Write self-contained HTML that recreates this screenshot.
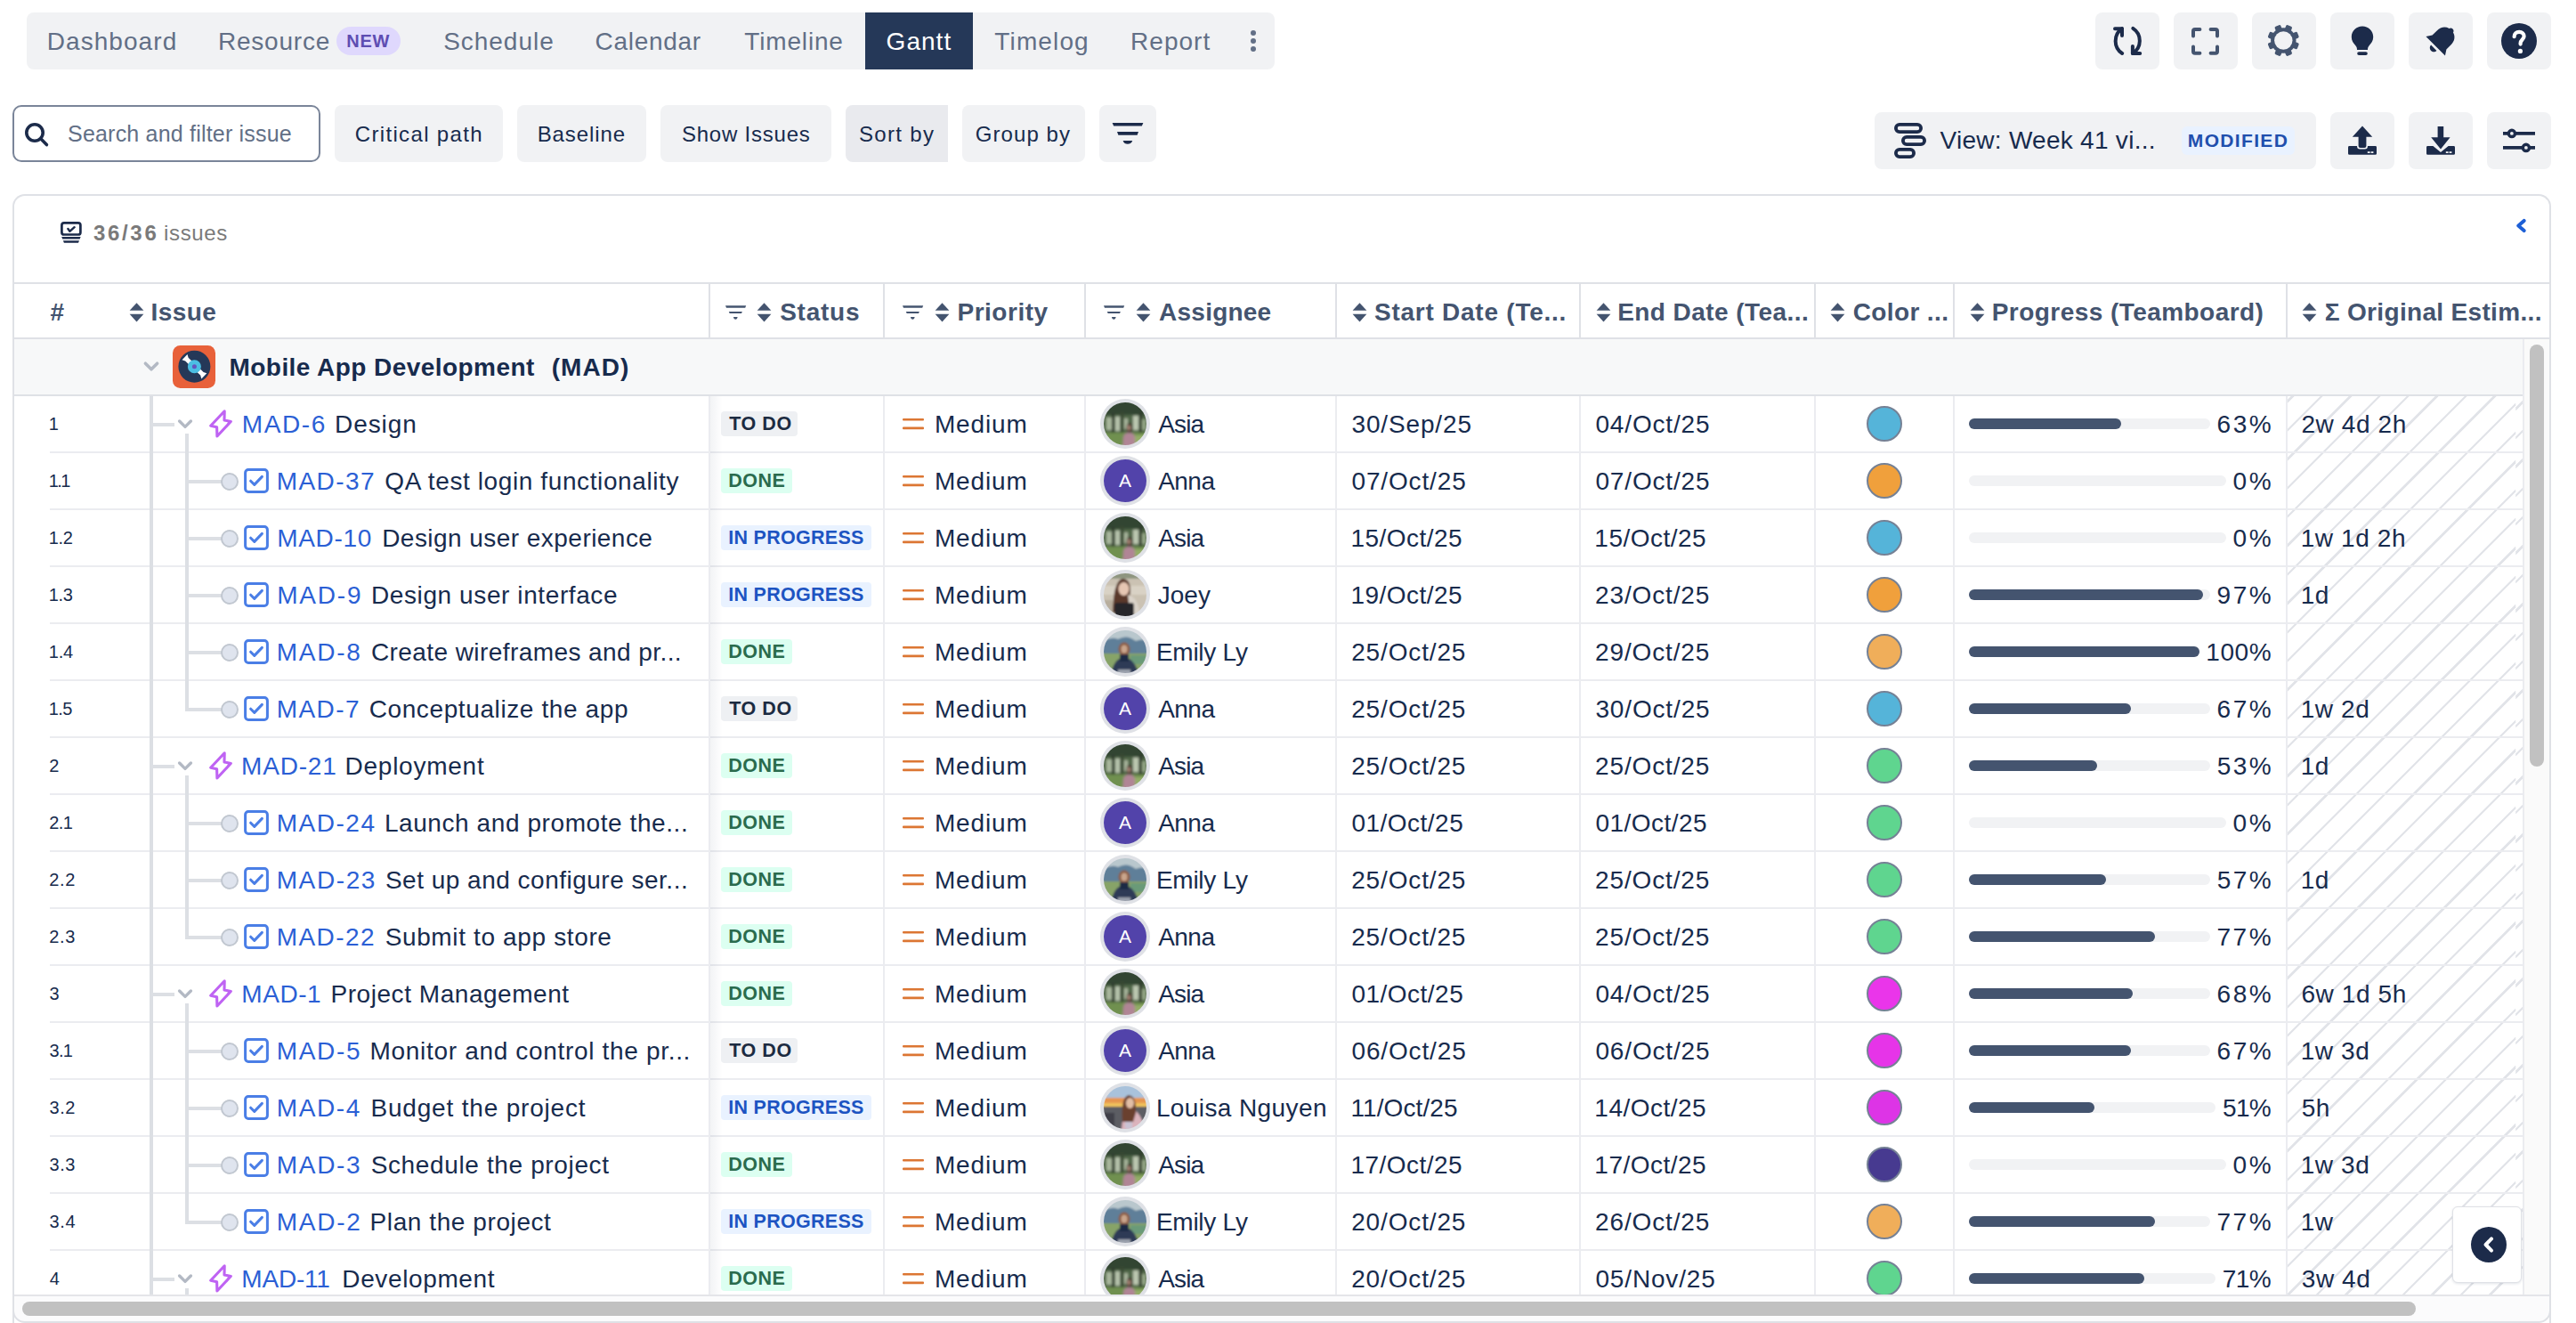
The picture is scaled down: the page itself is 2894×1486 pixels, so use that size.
<!DOCTYPE html><html><head><meta charset="utf-8"><style>
html,body{margin:0;padding:0;}
body{width:2894px;height:1486px;overflow:hidden;position:relative;background:#ffffff;font-family:"Liberation Sans",sans-serif;}
.t{position:absolute;white-space:nowrap;line-height:1;}
.b{position:absolute;box-sizing:border-box;}
svg.b{overflow:visible;}
</style></head><body>
<div class="b" style="left:30px;top:14px;width:1402px;height:64px;background:#f1f2f4;border-radius:8px;"></div>
<div class="b" style="left:972px;top:14px;width:121px;height:64px;background:#253858;"></div>
<div class="t" style="left:52.80px;top:32.89px;font-size:28px;color:#626f86;letter-spacing:1.053px;">Dashboard</div>
<div class="t" style="left:245.00px;top:32.89px;font-size:28px;color:#626f86;letter-spacing:0.772px;">Resource</div>
<div class="t" style="left:498.13px;top:32.89px;font-size:28px;color:#626f86;letter-spacing:0.980px;">Schedule</div>
<div class="t" style="left:668.58px;top:32.89px;font-size:28px;color:#626f86;letter-spacing:0.694px;">Calendar</div>
<div class="t" style="left:836.37px;top:32.89px;font-size:28px;color:#626f86;letter-spacing:0.824px;">Timeline</div>
<div class="t" style="left:1117.37px;top:32.89px;font-size:28px;color:#626f86;letter-spacing:1.125px;">Timelog</div>
<div class="t" style="left:1270.10px;top:32.89px;font-size:28px;color:#626f86;letter-spacing:1.012px;">Report</div>
<div class="t" style="left:995.59px;top:32.89px;font-size:28px;color:#ffffff;letter-spacing:1.033px;">Gantt</div>
<div class="b" style="left:378px;top:30px;width:72px;height:32px;background:#dfd8fd;border-radius:16px;"></div>
<div class="t" style="left:389.36px;top:36.17px;font-size:20px;color:#5e4db2;font-weight:700;letter-spacing:0.699px;">NEW</div>
<div class="b" style="left:1405px;top:33.5px;width:6px;height:6px;background:#626f86;border-radius:50%;"></div>
<div class="b" style="left:1405px;top:43px;width:6px;height:6px;background:#626f86;border-radius:50%;"></div>
<div class="b" style="left:1405px;top:52.4px;width:6px;height:6px;background:#626f86;border-radius:50%;"></div>
<div class="b" style="left:2354px;top:14px;width:72px;height:64px;background:#f1f2f4;border-radius:8px;"></div>
<div class="b" style="left:2442px;top:14px;width:72px;height:64px;background:#f1f2f4;border-radius:8px;"></div>
<div class="b" style="left:2530px;top:14px;width:72px;height:64px;background:#f1f2f4;border-radius:8px;"></div>
<div class="b" style="left:2618px;top:14px;width:72px;height:64px;background:#f1f2f4;border-radius:8px;"></div>
<div class="b" style="left:2706px;top:14px;width:72px;height:64px;background:#f1f2f4;border-radius:8px;"></div>
<div class="b" style="left:2794px;top:14px;width:72px;height:64px;background:#f1f2f4;border-radius:8px;"></div>
<svg class="b" style="left:2374px;top:30px" width="32" height="32" viewBox="0 0 32 32"><g fill="none" stroke="#1c2b4a" stroke-width="4" stroke-linecap="round" stroke-linejoin="round"><path d="M10 2.2 A16.7 16.7 0 0 0 10.2 30"/><path d="M2 2.2 H10 V9.9"/><path d="M22.3 1.8 A16.7 16.7 0 0 1 21.9 30"/><path d="M21.9 21.9 V30 H30.2"/></g></svg>
<svg class="b" style="left:2462.3px;top:30.6px" width="32" height="32" viewBox="0 0 32 32"><g fill="none" stroke="#44546f" stroke-width="4" stroke-linecap="round" stroke-linejoin="round"><path d="M2 9.4 V4 Q2 2 4 2 H9.4"/><path d="M21.6 2 H27 Q29 2 29 4 V9.4"/><path d="M29 21.4 V26.8 Q29 28.8 27 28.8 H21.6"/><path d="M9.4 28.8 H4 Q2 28.8 2 26.8 V21.4"/></g></svg>
<svg class="b" style="left:2547px;top:27px" width="36" height="36" viewBox="0 0 36 36"><g transform="translate(18.3 18.5)" fill="#44546f"><rect x="-3.6" y="-17.8" width="7.2" height="8" rx="1.6" transform="rotate(22.5)"/><rect x="-3.6" y="-17.8" width="7.2" height="8" rx="1.6" transform="rotate(67.5)"/><rect x="-3.6" y="-17.8" width="7.2" height="8" rx="1.6" transform="rotate(112.5)"/><rect x="-3.6" y="-17.8" width="7.2" height="8" rx="1.6" transform="rotate(157.5)"/><rect x="-3.6" y="-17.8" width="7.2" height="8" rx="1.6" transform="rotate(202.5)"/><rect x="-3.6" y="-17.8" width="7.2" height="8" rx="1.6" transform="rotate(247.5)"/><rect x="-3.6" y="-17.8" width="7.2" height="8" rx="1.6" transform="rotate(292.5)"/><rect x="-3.6" y="-17.8" width="7.2" height="8" rx="1.6" transform="rotate(337.5)"/><circle r="14.2"/></g><circle cx="18.3" cy="18.5" r="10.2" fill="#f1f2f4"/></svg>
<svg class="b" style="left:2640px;top:28px" width="28" height="36" viewBox="0 0 28 36"><g fill="#1c2b4a"><path d="M14 1.6 C7.2 1.6 1.8 6.8 1.8 13.4 C1.8 17.6 4 20.4 6.2 23 C7.6 24.6 8 26 8 27.9 H20 C20 26 20.4 24.6 21.8 23 C24 20.4 26.2 17.6 26.2 13.4 C26.2 6.8 20.8 1.6 14 1.6 Z"/><rect x="8.2" y="30.2" width="11.6" height="3.8" rx="1.9"/></g></svg>
<svg class="b" style="left:2724px;top:25.6px" width="38" height="38" viewBox="0 0 38 38"><g fill="#1c2b4a" transform="translate(19 19) scale(1.12) rotate(45) translate(-19 -19)"><path d="M19 3.2 C20.6 3.2 21.6 4.2 21.8 5.4 C26.4 6.6 29 10.6 29 15.6 V22.2 L32.6 27.6 H5.4 L9 22.2 V15.6 C9 10.6 11.6 6.6 16.2 5.4 C16.4 4.2 17.4 3.2 19 3.2 Z"/><path d="M15 30 H23 C23 32.4 21.2 34 19 34 C16.8 34 15 32.4 15 30 Z"/></g></svg>
<svg class="b" style="left:2810px;top:25.8px" width="40" height="40" viewBox="0 0 40 40"><circle cx="20" cy="20" r="20" fill="#1c2b4a"/><path d="M14.6 15.2 C14.6 11.8 17 9.9 20.2 9.9 C23.4 9.9 25.6 12 25.6 14.8 C25.6 18.4 21.6 18.8 21.6 22.6 V23.6" fill="none" stroke="#fff" stroke-width="4.2" stroke-linecap="round"/><circle cx="21.4" cy="31.4" r="2.6" fill="#fff"/></svg>
<div class="b" style="left:14px;top:118px;width:346px;height:64px;border:2px solid #7a8599;border-radius:10px;background:#fff;"></div>
<svg class="b" style="left:26px;top:136px" width="30" height="30" viewBox="0 0 30 30"><g fill="none" stroke="#1c2b4a" stroke-width="3.6" stroke-linecap="round"><circle cx="13" cy="13" r="9.2"/><path d="M20 20 L26.4 26.6"/></g></svg>
<div class="t" style="left:76.06px;top:138.13px;font-size:25px;color:#626f86;letter-spacing:0.195px;">Search and filter issue</div>
<div class="b" style="left:376px;top:118px;width:189px;height:64px;background:#f1f2f4;border-radius:8px;"></div>
<div class="t" style="left:398.78px;top:138.58px;font-size:24px;color:#172b4d;letter-spacing:1.339px;">Critical path</div>
<div class="b" style="left:581px;top:118px;width:145px;height:64px;background:#f1f2f4;border-radius:8px;"></div>
<div class="t" style="left:603.73px;top:138.58px;font-size:24px;color:#172b4d;letter-spacing:0.896px;">Baseline</div>
<div class="b" style="left:742px;top:118px;width:192px;height:64px;background:#f1f2f4;border-radius:8px;"></div>
<div class="t" style="left:765.91px;top:138.58px;font-size:24px;color:#172b4d;letter-spacing:0.789px;">Show Issues</div>
<div class="b" style="left:950px;top:118px;width:115px;height:64px;background:#e9eaee;border-radius:8px 0 0 8px;"></div>
<div class="t" style="left:964.91px;top:138.58px;font-size:24px;color:#172b4d;letter-spacing:1.351px;">Sort by</div>
<div class="b" style="left:1081px;top:118px;width:138px;height:64px;background:#f1f2f4;border-radius:8px;"></div>
<div class="t" style="left:1095.79px;top:138.58px;font-size:24px;color:#172b4d;letter-spacing:1.076px;">Group by</div>
<div class="b" style="left:1235px;top:118px;width:64px;height:64px;background:#f1f2f4;border-radius:8px;"></div>
<svg class="b" style="left:1248px;top:136px" width="38" height="28" viewBox="0 0 38 28"><g fill="#1c2b4a"><path d="M1.6 2 H36.4 L34.8 5.6 H3.2 Z"/><path d="M7 12 H31 L29.6 15.8 H8.4 Z"/><path d="M13.6 22 H24.2 C23.4 24.8 21.4 25.8 18.9 25.8 C16.4 25.8 14.4 24.8 13.6 22 Z"/></g></svg>
<div class="b" style="left:2106px;top:126px;width:496px;height:64px;background:#f1f2f4;border-radius:8px;"></div>
<svg class="b" style="left:2126px;top:136px" width="40" height="44" viewBox="0 0 40 44"><g fill="none" stroke="#1c2b4a" stroke-width="3.8"><rect x="3.9" y="3.9" width="28.2" height="8.2" rx="4.1"/><rect x="11.9" y="17.9" width="24.2" height="8.2" rx="4.1"/><rect x="3.9" y="31.9" width="20.2" height="8.2" rx="4.1"/></g></svg>
<div class="t" style="left:2179.48px;top:144.29px;font-size:28px;color:#172b4d;letter-spacing:0.278px;">View: Week 41 vi...</div>
<div class="b" style="left:2450.5px;top:141.5px;width:127px;height:32.5px;background:#e9f2ff;border-radius:6px;"></div>
<div class="t" style="left:2457.80px;top:147.22px;font-size:21px;color:#1f4fad;font-weight:700;letter-spacing:1.346px;">MODIFIED</div>
<div class="b" style="left:2618px;top:126px;width:72px;height:64px;background:#f1f2f4;border-radius:8px;"></div>
<div class="b" style="left:2706px;top:126px;width:72px;height:64px;background:#f1f2f4;border-radius:8px;"></div>
<div class="b" style="left:2794px;top:126px;width:72px;height:64px;background:#f1f2f4;border-radius:8px;"></div>
<svg class="b" style="left:2636px;top:140px" width="36" height="36" viewBox="0 0 36 36"><g fill="#1c2b4a"><path d="M18 1.6 L29.2 13.8 H22.4 V24 Q22.4 26 20.4 26 H15.6 Q13.6 26 13.6 24 V13.8 H6.8 Z"/><path d="M2 25.4 Q2 24 3.4 24 H12 Q12 27.6 15.2 27.6 H20.8 Q24 27.6 24 24 H32.6 Q34 24 34 25.4 V32.4 Q34 33.8 32.6 33.8 H3.4 Q2 33.8 2 32.4 Z"/></g><g fill="#f1f2f4"><rect x="23.8" y="30.2" width="2.8" height="1.8"/><rect x="27.6" y="30.2" width="2.8" height="1.8"/></g></svg>
<svg class="b" style="left:2724px;top:140px" width="36" height="36" viewBox="0 0 36 36"><g fill="#1c2b4a"><path d="M14.6 2 H21.2 V14.2 H28.6 L18 27.4 L7.2 14.2 H14.6 Z"/><path d="M2 25.4 Q2 24 3.4 24 H9.4 L18 31 L26.6 24 H32.6 Q34 24 34 25.4 V32.4 Q34 33.8 32.6 33.8 H3.4 Q2 33.8 2 32.4 Z"/></g><g fill="#f1f2f4"><rect x="23.8" y="30.2" width="2.8" height="1.8"/><rect x="27.6" y="30.2" width="2.8" height="1.8"/></g></svg>
<svg class="b" style="left:2810px;top:140px" width="40" height="32" viewBox="0 0 40 32"><g fill="none" stroke="#1c2b4a"><path d="M2 9.9 H38" stroke-width="3.8"/><path d="M2 25.9 H38" stroke-width="3.8"/><circle cx="11.9" cy="9.9" r="3.6" stroke-width="3.4" fill="#f1f2f4"/><circle cx="27.9" cy="25.9" r="3.6" stroke-width="3.4" fill="#f1f2f4"/></g></svg>
<div class="b" style="left:14px;top:218px;width:2852px;height:1268px;border:2px solid #dfe1e6;border-bottom:none;border-radius:14px 14px 0 0;background:#fff;"></div>
<div class="b" style="left:14px;top:1456px;width:2852px;height:30px;border:2px solid #dfe1e6;border-top:none;border-radius:0 0 14px 14px;background:#fbfbfc;"></div>
<svg class="b" style="left:66px;top:247px" width="28" height="28" viewBox="0 0 28 28"><g fill="none" stroke="#1c2b4a" stroke-width="2.7" stroke-linejoin="round"><rect x="3.4" y="3.3" width="21" height="13.2" rx="2.6"/><path d="M10.4 10 L12.4 12.8 L17.6 8.2" stroke-width="2.4" stroke-linecap="round"/></g><g fill="#1c2b4a"><path d="M3.2 19 H24.6 L23.6 21.6 H4.2 Z"/><path d="M4.9 23.2 H23 L22 25.8 H5.9 Z"/></g></svg>
<div class="t" style="left:104.95px;top:249.68px;font-size:24px;color:#7a7a7a;font-weight:700;letter-spacing:2.690px;">36/36</div>
<div class="t" style="left:184.09px;top:249.68px;font-size:24px;color:#7a7a7a;letter-spacing:0.649px;">issues</div>
<svg class="b" style="left:2824px;top:243px" width="18" height="22" viewBox="0 0 18 22"><path d="M11.6 4.9 L5.3 10.5 L11.6 16.1" fill="none" stroke="#1d5fd6" stroke-width="4" stroke-linecap="round" stroke-linejoin="round"/></svg>
<div class="b" style="left:16px;top:317px;width:2848px;height:2px;background:#dfe1e6;"></div>
<div class="b" style="left:16px;top:379px;width:2848px;height:2px;background:#dfe1e6;"></div>
<div class="b" style="left:796px;top:319px;width:2px;height:60px;background:#dfe1e6;"></div>
<div class="b" style="left:992px;top:319px;width:2px;height:60px;background:#dfe1e6;"></div>
<div class="b" style="left:1218px;top:319px;width:2px;height:60px;background:#dfe1e6;"></div>
<div class="b" style="left:1500px;top:319px;width:2px;height:60px;background:#dfe1e6;"></div>
<div class="b" style="left:1774px;top:319px;width:2px;height:60px;background:#dfe1e6;"></div>
<div class="b" style="left:2038px;top:319px;width:2px;height:60px;background:#dfe1e6;"></div>
<div class="b" style="left:2194px;top:319px;width:2px;height:60px;background:#dfe1e6;"></div>
<div class="b" style="left:2568px;top:319px;width:2px;height:60px;background:#dfe1e6;"></div>
<div class="t" style="left:56.52px;top:337.29px;font-size:28px;color:#44546f;font-weight:700;letter-spacing:0.000px;">#</div>
<svg class="b" style="left:144.5px;top:340px" width="17" height="22" viewBox="0 0 17 22"><g fill="#44546f"><path d="M8.5 0.2 L16.4 8.8 H0.6 Z"/><path d="M0.6 12.8 H16.4 L8.5 21.6 Z"/></g></svg>
<div class="t" style="left:169.53px;top:337.29px;font-size:28px;color:#44546f;font-weight:700;letter-spacing:0.458px;">Issue</div>
<svg class="b" style="left:814.5px;top:343px" width="24" height="16" viewBox="0 0 24 16"><g fill="#44546f"><path d="M0 0.2 H23.2 L22.2 2.7 H1 Z"/><path d="M3.8 7.1 H18.9 L18 9.1 H4.7 Z"/><path d="M9 13 H13.6 C13.4 14.8 12.6 15.8 11.3 15.8 C10 15.8 9.2 14.8 9 13 Z"/></g></svg>
<svg class="b" style="left:850.4px;top:340px" width="17" height="22" viewBox="0 0 17 22"><g fill="#44546f"><path d="M8.5 0.2 L16.4 8.8 H0.6 Z"/><path d="M0.6 12.8 H16.4 L8.5 21.6 Z"/></g></svg>
<div class="t" style="left:876.19px;top:337.29px;font-size:28px;color:#44546f;font-weight:700;letter-spacing:0.757px;">Status</div>
<svg class="b" style="left:1014.4px;top:343px" width="24" height="16" viewBox="0 0 24 16"><g fill="#44546f"><path d="M0 0.2 H23.2 L22.2 2.7 H1 Z"/><path d="M3.8 7.1 H18.9 L18 9.1 H4.7 Z"/><path d="M9 13 H13.6 C13.4 14.8 12.6 15.8 11.3 15.8 C10 15.8 9.2 14.8 9 13 Z"/></g></svg>
<svg class="b" style="left:1050px;top:340px" width="17" height="22" viewBox="0 0 17 22"><g fill="#44546f"><path d="M8.5 0.2 L16.4 8.8 H0.6 Z"/><path d="M0.6 12.8 H16.4 L8.5 21.6 Z"/></g></svg>
<div class="t" style="left:1075.43px;top:337.29px;font-size:28px;color:#44546f;font-weight:700;letter-spacing:0.528px;">Priority</div>
<svg class="b" style="left:1239.6px;top:343px" width="24" height="16" viewBox="0 0 24 16"><g fill="#44546f"><path d="M0 0.2 H23.2 L22.2 2.7 H1 Z"/><path d="M3.8 7.1 H18.9 L18 9.1 H4.7 Z"/><path d="M9 13 H13.6 C13.4 14.8 12.6 15.8 11.3 15.8 C10 15.8 9.2 14.8 9 13 Z"/></g></svg>
<svg class="b" style="left:1276px;top:340px" width="17" height="22" viewBox="0 0 17 22"><g fill="#44546f"><path d="M8.5 0.2 L16.4 8.8 H0.6 Z"/><path d="M0.6 12.8 H16.4 L8.5 21.6 Z"/></g></svg>
<div class="t" style="left:1302.10px;top:337.29px;font-size:28px;color:#44546f;font-weight:700;letter-spacing:0.223px;">Assignee</div>
<svg class="b" style="left:1518.6px;top:340px" width="17" height="22" viewBox="0 0 17 22"><g fill="#44546f"><path d="M8.5 0.2 L16.4 8.8 H0.6 Z"/><path d="M0.6 12.8 H16.4 L8.5 21.6 Z"/></g></svg>
<div class="t" style="left:1543.99px;top:337.29px;font-size:28px;color:#44546f;font-weight:700;letter-spacing:0.753px;">Start Date (Te...</div>
<svg class="b" style="left:1792.5px;top:340px" width="17" height="22" viewBox="0 0 17 22"><g fill="#44546f"><path d="M8.5 0.2 L16.4 8.8 H0.6 Z"/><path d="M0.6 12.8 H16.4 L8.5 21.6 Z"/></g></svg>
<div class="t" style="left:1817.13px;top:337.29px;font-size:28px;color:#44546f;font-weight:700;letter-spacing:0.451px;">End Date (Tea...</div>
<svg class="b" style="left:2056px;top:340px" width="17" height="22" viewBox="0 0 17 22"><g fill="#44546f"><path d="M8.5 0.2 L16.4 8.8 H0.6 Z"/><path d="M0.6 12.8 H16.4 L8.5 21.6 Z"/></g></svg>
<div class="t" style="left:2081.65px;top:337.29px;font-size:28px;color:#44546f;font-weight:700;letter-spacing:0.382px;">Color ...</div>
<svg class="b" style="left:2212.7px;top:340px" width="17" height="22" viewBox="0 0 17 22"><g fill="#44546f"><path d="M8.5 0.2 L16.4 8.8 H0.6 Z"/><path d="M0.6 12.8 H16.4 L8.5 21.6 Z"/></g></svg>
<div class="t" style="left:2237.73px;top:337.29px;font-size:28px;color:#44546f;font-weight:700;letter-spacing:0.449px;">Progress (Teamboard)</div>
<svg class="b" style="left:2586.4px;top:340px" width="17" height="22" viewBox="0 0 17 22"><g fill="#44546f"><path d="M8.5 0.2 L16.4 8.8 H0.6 Z"/><path d="M0.6 12.8 H16.4 L8.5 21.6 Z"/></g></svg>
<div class="t" style="left:2611.77px;top:337.29px;font-size:28px;color:#44546f;font-weight:700;letter-spacing:0.329px;">Σ Original Estim...</div>
<div class="b" style="left:16px;top:381px;width:2819px;height:62px;background:#f7f8f9;"></div>
<div class="b" style="left:16px;top:443px;width:2819px;height:2px;background:#dfe1e6;"></div>
<svg class="b" style="left:160px;top:404px" width="20" height="16" viewBox="0 0 20 16"><path d="M3.4 4.2 L10 10.8 L16.6 4.2" fill="none" stroke="#b3b9c4" stroke-width="3.6" stroke-linecap="round" stroke-linejoin="round"/></svg>
<svg class="b" style="left:194px;top:388px" width="48" height="48" viewBox="0 0 48 48"><rect width="48" height="48" rx="8.5" fill="#e8613a"/><circle cx="24.4" cy="23.7" r="18" fill="#253858"/><g fill="#fff"><path id="pw" d="M10.5 16.2 L16.5 9.9 L17.6 13.8 L21.4 17.4 L17.8 21 L14.2 17.4 Z"/><path d="M10.5 16.2 L16.5 9.9 L17.6 13.8 L21.4 17.4 L17.8 21 L14.2 17.4 Z" transform="rotate(180 24.4 23.7)"/></g><circle cx="24.4" cy="23.7" r="7.5" fill="#4bbee3"/><circle cx="24.4" cy="23.7" r="2.5" fill="#6554c0"/></svg>
<div class="t" style="left:257.53px;top:398.79px;font-size:28px;color:#172b4d;font-weight:700;letter-spacing:0.445px;">Mobile App Development</div>
<div class="t" style="left:619.71px;top:398.79px;font-size:28px;color:#172b4d;font-weight:700;letter-spacing:1.069px;">(MAD)</div>
<div class="b" style="left:16px;top:445px;width:2819px;height:1010px;overflow:hidden;">
<div class="b" style="left:-16px;top:-445px;width:2894px;height:1486px;">
<div class="b" style="left:2570px;top:445px;width:265px;height:1011px;background:repeating-linear-gradient(-45deg, transparent 0px, transparent 20.5px, #e1e3e8 20.5px, #e1e3e8 22.9px);background-position:-8.80px 0;"></div>
<div class="b" style="left:56px;top:507px;width:2779px;height:2px;background:#ebecf0;"></div>
<div class="b" style="left:56px;top:571px;width:2779px;height:2px;background:#ebecf0;"></div>
<div class="b" style="left:56px;top:635px;width:2779px;height:2px;background:#ebecf0;"></div>
<div class="b" style="left:56px;top:699px;width:2779px;height:2px;background:#ebecf0;"></div>
<div class="b" style="left:56px;top:763px;width:2779px;height:2px;background:#ebecf0;"></div>
<div class="b" style="left:56px;top:827px;width:2779px;height:2px;background:#ebecf0;"></div>
<div class="b" style="left:56px;top:891px;width:2779px;height:2px;background:#ebecf0;"></div>
<div class="b" style="left:56px;top:955px;width:2779px;height:2px;background:#ebecf0;"></div>
<div class="b" style="left:56px;top:1019px;width:2779px;height:2px;background:#ebecf0;"></div>
<div class="b" style="left:56px;top:1083px;width:2779px;height:2px;background:#ebecf0;"></div>
<div class="b" style="left:56px;top:1147px;width:2779px;height:2px;background:#ebecf0;"></div>
<div class="b" style="left:56px;top:1211px;width:2779px;height:2px;background:#ebecf0;"></div>
<div class="b" style="left:56px;top:1275px;width:2779px;height:2px;background:#ebecf0;"></div>
<div class="b" style="left:56px;top:1339px;width:2779px;height:2px;background:#ebecf0;"></div>
<div class="b" style="left:56px;top:1403px;width:2779px;height:2px;background:#ebecf0;"></div>
<div class="b" style="left:56px;top:1467px;width:2779px;height:2px;background:#ebecf0;"></div>
<div class="b" style="left:796px;top:445px;width:2px;height:1011px;background:#ebecf0;"></div>
<div class="b" style="left:992px;top:445px;width:2px;height:1011px;background:#ebecf0;"></div>
<div class="b" style="left:1218px;top:445px;width:2px;height:1011px;background:#ebecf0;"></div>
<div class="b" style="left:1500px;top:445px;width:2px;height:1011px;background:#ebecf0;"></div>
<div class="b" style="left:1774px;top:445px;width:2px;height:1011px;background:#ebecf0;"></div>
<div class="b" style="left:2038px;top:445px;width:2px;height:1011px;background:#ebecf0;"></div>
<div class="b" style="left:2194px;top:445px;width:2px;height:1011px;background:#ebecf0;"></div>
<div class="b" style="left:2568px;top:445px;width:2px;height:1011px;background:#ebecf0;"></div>
<div class="b" style="left:798px;top:445px;width:14px;height:1011px;background:linear-gradient(90deg, rgba(9,30,66,0.05), rgba(9,30,66,0));"></div>
<div class="b" style="left:168px;top:445px;width:4px;height:1011px;background:#dcdfe4;"></div>
<div class="b" style="left:208px;top:487px;width:4px;height:312px;background:#dcdfe4;"></div>
<div class="b" style="left:208px;top:871px;width:4px;height:184px;background:#dcdfe4;"></div>
<div class="b" style="left:208px;top:1127px;width:4px;height:248px;background:#dcdfe4;"></div>
<div class="b" style="left:208px;top:1447px;width:4px;height:10px;background:#dcdfe4;"></div>
<div class="t" style="left:54.78px;top:466.07px;font-size:20px;color:#172b4d;letter-spacing:0.000px;">1</div>
<div class="b" style="left:168px;top:475px;width:28px;height:4px;background:#dcdfe4;"></div>
<svg class="b" style="left:199px;top:470px" width="18" height="14" viewBox="0 0 18 14"><path d="M2.6 3 L9 9.4 L15.4 3" fill="none" stroke="#b3b9c4" stroke-width="3.4" stroke-linecap="round" stroke-linejoin="round"/></svg>
<svg class="b" style="left:232px;top:458px" width="32" height="36" viewBox="0 0 32 36"><path d="M20.2 3.7 L4.7 20.2 L11.6 21.8 L11.9 32 L27.3 15.4 L20 13.9 Z" fill="none" stroke="#bf63f3" stroke-width="3.1" stroke-linejoin="round"/></svg>
<div class="t" style="left:271.80px;top:463.09px;font-size:28px;color:#2b5fd5;letter-spacing:1.603px;">MAD-6</div>
<div class="t" style="left:376.10px;top:463.09px;font-size:28px;color:#172b4d;letter-spacing:0.891px;">Design</div>
<div class="b" style="left:810px;top:462.4px;width:86px;height:27.3px;background:#eef0f3;border-radius:4px;"></div>
<div class="t" style="left:819.36px;top:465.80px;font-size:21.5px;color:#1c2b41;font-weight:700;letter-spacing:0.516px;">TO DO</div>
<svg class="b" style="left:1014px;top:468px" width="24" height="16" viewBox="0 0 24 16"><g fill="#dc7633"><rect x="0" y="2" width="24" height="2.6" rx="1"/><rect x="0" y="11.6" width="24" height="2.6" rx="1"/></g></svg>
<div class="t" style="left:1049.90px;top:463.09px;font-size:28px;color:#172b4d;letter-spacing:0.871px;">Medium</div>
<div class="b" style="left:1236px;top:448px;width:56px;height:56px;background:#dfe1e6;border-radius:50%;"></div>
<svg class="b" style="left:1240px;top:452px" width="48" height="48" viewBox="0 0 48 48"><defs><clipPath id="ca0"><circle cx="24" cy="24" r="24"/></clipPath><filter id="fb0" x="-10%" y="-10%" width="120%" height="120%"><feGaussianBlur stdDeviation="1.4"/></filter></defs><g clip-path="url(#ca0)"><g filter="url(#fb0)"><rect x="-4" y="-4" width="56" height="56" fill="#4f6647"/><rect x="-4" y="-4" width="56" height="18" fill="#334430"/><rect x="3" y="17" width="6" height="14" fill="#a9b89d"/><rect x="13" y="16" width="5" height="16" fill="#b8c4ad"/><rect x="23" y="18" width="4" height="12" fill="#aab79e"/><rect x="33" y="15" width="6" height="16" fill="#bcc7b1"/><rect x="42" y="19" width="5" height="12" fill="#98aa88"/><rect x="9" y="12" width="3" height="26" fill="#2c3829"/><rect x="19" y="10" width="3" height="28" fill="#384633"/><rect x="40" y="12" width="3" height="30" fill="#2a3527"/><rect x="-4" y="34" width="56" height="20" fill="#6f9050"/><rect x="28" y="37" width="20" height="13" fill="#93ad66"/><path d="M21 54 L22 39 Q23 34 28.5 34 Q34 34 35 39 L35 54 Z" fill="#b08595"/><ellipse cx="29" cy="28.5" rx="3.4" ry="5.5" fill="#3f302b"/><ellipse cx="28.4" cy="28.5" rx="2" ry="3" fill="#a88474"/></g></g></svg>
<div class="t" style="left:1301.15px;top:463.09px;font-size:28px;color:#172b4d;letter-spacing:-0.805px;">Asia</div>
<div class="t" style="left:1518.53px;top:463.09px;font-size:28px;color:#172b4d;letter-spacing:0.850px;">30/Sep/25</div>
<div class="t" style="left:1792.41px;top:463.09px;font-size:28px;color:#172b4d;letter-spacing:0.850px;">04/Oct/25</div>
<div class="b" style="left:2097px;top:456px;width:40px;height:40px;background:#55b4d9;border:2px solid #758195;border-radius:50%;"></div>
<div class="t" style="left:2490.48px;top:463.09px;font-size:28px;color:#172b4d;letter-spacing:2.589px;">63%</div>
<div class="b" style="left:2212px;top:470px;width:270.9px;height:12px;background:#f1f2f4;border-radius:6px;"></div>
<div class="b" style="left:2212px;top:470px;width:170.667px;height:12px;background:#44546f;border-radius:6px;"></div>
<div class="t" style="left:2585.39px;top:463.09px;font-size:28px;color:#172b4d;letter-spacing:0.600px;">2w 4d 2h</div>
<div class="t" style="left:54.78px;top:530.07px;font-size:20px;color:#172b4d;letter-spacing:-1.551px;">1.1</div>
<div class="b" style="left:208px;top:539px;width:41px;height:4px;background:#dcdfe4;"></div>
<svg class="b" style="left:247px;top:530px" width="22" height="22" viewBox="0 0 22 22"><circle cx="11" cy="11" r="9" fill="#dfe4ee" stroke="#c1c7d0" stroke-width="2"/></svg>
<svg class="b" style="left:273px;top:525px" width="30" height="30" viewBox="0 0 30 30"><rect x="2.6" y="2.6" width="24.8" height="24.8" rx="3.4" fill="none" stroke="#4a7ee6" stroke-width="3"/><path d="M8.6 15.2 L12.8 19.4 L21.4 10.4" fill="none" stroke="#4a7ee6" stroke-width="3" stroke-linecap="round" stroke-linejoin="round"/></svg>
<div class="t" style="left:310.70px;top:527.09px;font-size:28px;color:#2b5fd5;letter-spacing:1.443px;">MAD-37</div>
<div class="t" style="left:432.37px;top:527.09px;font-size:28px;color:#172b4d;letter-spacing:0.605px;">QA test login functionality</div>
<div class="b" style="left:810px;top:526.4px;width:80px;height:27.3px;background:#dcfff1;border-radius:4px;"></div>
<div class="t" style="left:818.16px;top:529.80px;font-size:21.5px;color:#2a6b4d;font-weight:700;letter-spacing:0.554px;">DONE</div>
<svg class="b" style="left:1014px;top:532px" width="24" height="16" viewBox="0 0 24 16"><g fill="#dc7633"><rect x="0" y="2" width="24" height="2.6" rx="1"/><rect x="0" y="11.6" width="24" height="2.6" rx="1"/></g></svg>
<div class="t" style="left:1049.90px;top:527.09px;font-size:28px;color:#172b4d;letter-spacing:0.871px;">Medium</div>
<div class="b" style="left:1236px;top:512px;width:56px;height:56px;background:#dfe1e6;border-radius:50%;"></div>
<div class="b" style="left:1240px;top:516px;width:48px;height:48px;background:#5243aa;border-radius:50%;"></div>
<div class="t" style="left:1256.96px;top:529.42px;font-size:21px;color:#ffffff;letter-spacing:0.000px;">A</div>
<div class="t" style="left:1301.15px;top:527.09px;font-size:28px;color:#172b4d;letter-spacing:-0.513px;">Anna</div>
<div class="t" style="left:1518.51px;top:527.09px;font-size:28px;color:#172b4d;letter-spacing:0.850px;">07/Oct/25</div>
<div class="t" style="left:1792.41px;top:527.09px;font-size:28px;color:#172b4d;letter-spacing:0.850px;">07/Oct/25</div>
<div class="b" style="left:2097px;top:520px;width:40px;height:40px;background:#f0a03c;border:2px solid #758195;border-radius:50%;"></div>
<div class="t" style="left:2508.61px;top:527.09px;font-size:28px;color:#172b4d;letter-spacing:2.623px;">0%</div>
<div class="b" style="left:2212px;top:534px;width:288.7px;height:12px;background:#f1f2f4;border-radius:6px;"></div>
<div class="t" style="left:54.78px;top:594.07px;font-size:20px;color:#172b4d;letter-spacing:-0.287px;">1.2</div>
<div class="b" style="left:208px;top:603px;width:41px;height:4px;background:#dcdfe4;"></div>
<svg class="b" style="left:247px;top:594px" width="22" height="22" viewBox="0 0 22 22"><circle cx="11" cy="11" r="9" fill="#dfe4ee" stroke="#c1c7d0" stroke-width="2"/></svg>
<svg class="b" style="left:273px;top:589px" width="30" height="30" viewBox="0 0 30 30"><rect x="2.6" y="2.6" width="24.8" height="24.8" rx="3.4" fill="none" stroke="#4a7ee6" stroke-width="3"/><path d="M8.6 15.2 L12.8 19.4 L21.4 10.4" fill="none" stroke="#4a7ee6" stroke-width="3" stroke-linecap="round" stroke-linejoin="round"/></svg>
<div class="t" style="left:311.20px;top:591.09px;font-size:28px;color:#2b5fd5;letter-spacing:0.680px;">MAD-10</div>
<div class="t" style="left:429.20px;top:591.09px;font-size:28px;color:#172b4d;letter-spacing:0.456px;">Design user experience</div>
<div class="b" style="left:810px;top:590.4px;width:169px;height:27.3px;background:#e9f2ff;border-radius:4px;"></div>
<div class="t" style="left:818.16px;top:593.80px;font-size:21.5px;color:#1d54c2;font-weight:700;letter-spacing:0.294px;">IN PROGRESS</div>
<svg class="b" style="left:1014px;top:596px" width="24" height="16" viewBox="0 0 24 16"><g fill="#dc7633"><rect x="0" y="2" width="24" height="2.6" rx="1"/><rect x="0" y="11.6" width="24" height="2.6" rx="1"/></g></svg>
<div class="t" style="left:1049.90px;top:591.09px;font-size:28px;color:#172b4d;letter-spacing:0.871px;">Medium</div>
<div class="b" style="left:1236px;top:576px;width:56px;height:56px;background:#dfe1e6;border-radius:50%;"></div>
<svg class="b" style="left:1240px;top:580px" width="48" height="48" viewBox="0 0 48 48"><defs><clipPath id="ca2"><circle cx="24" cy="24" r="24"/></clipPath><filter id="fb2" x="-10%" y="-10%" width="120%" height="120%"><feGaussianBlur stdDeviation="1.4"/></filter></defs><g clip-path="url(#ca2)"><g filter="url(#fb2)"><rect x="-4" y="-4" width="56" height="56" fill="#4f6647"/><rect x="-4" y="-4" width="56" height="18" fill="#334430"/><rect x="3" y="17" width="6" height="14" fill="#a9b89d"/><rect x="13" y="16" width="5" height="16" fill="#b8c4ad"/><rect x="23" y="18" width="4" height="12" fill="#aab79e"/><rect x="33" y="15" width="6" height="16" fill="#bcc7b1"/><rect x="42" y="19" width="5" height="12" fill="#98aa88"/><rect x="9" y="12" width="3" height="26" fill="#2c3829"/><rect x="19" y="10" width="3" height="28" fill="#384633"/><rect x="40" y="12" width="3" height="30" fill="#2a3527"/><rect x="-4" y="34" width="56" height="20" fill="#6f9050"/><rect x="28" y="37" width="20" height="13" fill="#93ad66"/><path d="M21 54 L22 39 Q23 34 28.5 34 Q34 34 35 39 L35 54 Z" fill="#b08595"/><ellipse cx="29" cy="28.5" rx="3.4" ry="5.5" fill="#3f302b"/><ellipse cx="28.4" cy="28.5" rx="2" ry="3" fill="#a88474"/></g></g></svg>
<div class="t" style="left:1301.15px;top:591.09px;font-size:28px;color:#172b4d;letter-spacing:-0.805px;">Asia</div>
<div class="t" style="left:1517.47px;top:591.09px;font-size:28px;color:#172b4d;letter-spacing:0.475px;">15/Oct/25</div>
<div class="t" style="left:1791.37px;top:591.09px;font-size:28px;color:#172b4d;letter-spacing:0.475px;">15/Oct/25</div>
<div class="b" style="left:2097px;top:584px;width:40px;height:40px;background:#55b4d9;border:2px solid #758195;border-radius:50%;"></div>
<div class="t" style="left:2508.61px;top:591.09px;font-size:28px;color:#172b4d;letter-spacing:2.623px;">0%</div>
<div class="b" style="left:2212px;top:598px;width:288.7px;height:12px;background:#f1f2f4;border-radius:6px;"></div>
<div class="t" style="left:2584.67px;top:591.09px;font-size:28px;color:#172b4d;letter-spacing:0.600px;">1w 1d 2h</div>
<div class="t" style="left:54.78px;top:658.07px;font-size:20px;color:#172b4d;letter-spacing:-0.350px;">1.3</div>
<div class="b" style="left:208px;top:667px;width:41px;height:4px;background:#dcdfe4;"></div>
<svg class="b" style="left:247px;top:658px" width="22" height="22" viewBox="0 0 22 22"><circle cx="11" cy="11" r="9" fill="#dfe4ee" stroke="#c1c7d0" stroke-width="2"/></svg>
<svg class="b" style="left:273px;top:653px" width="30" height="30" viewBox="0 0 30 30"><rect x="2.6" y="2.6" width="24.8" height="24.8" rx="3.4" fill="none" stroke="#4a7ee6" stroke-width="3"/><path d="M8.6 15.2 L12.8 19.4 L21.4 10.4" fill="none" stroke="#4a7ee6" stroke-width="3" stroke-linecap="round" stroke-linejoin="round"/></svg>
<div class="t" style="left:311.20px;top:655.09px;font-size:28px;color:#2b5fd5;letter-spacing:1.801px;">MAD-9</div>
<div class="t" style="left:417.00px;top:655.09px;font-size:28px;color:#172b4d;letter-spacing:0.598px;">Design user interface</div>
<div class="b" style="left:810px;top:654.4px;width:169px;height:27.3px;background:#e9f2ff;border-radius:4px;"></div>
<div class="t" style="left:818.16px;top:657.80px;font-size:21.5px;color:#1d54c2;font-weight:700;letter-spacing:0.294px;">IN PROGRESS</div>
<svg class="b" style="left:1014px;top:660px" width="24" height="16" viewBox="0 0 24 16"><g fill="#dc7633"><rect x="0" y="2" width="24" height="2.6" rx="1"/><rect x="0" y="11.6" width="24" height="2.6" rx="1"/></g></svg>
<div class="t" style="left:1049.90px;top:655.09px;font-size:28px;color:#172b4d;letter-spacing:0.871px;">Medium</div>
<div class="b" style="left:1236px;top:640px;width:56px;height:56px;background:#dfe1e6;border-radius:50%;"></div>
<svg class="b" style="left:1240px;top:644px" width="48" height="48" viewBox="0 0 48 48"><defs><clipPath id="ca3"><circle cx="24" cy="24" r="24"/></clipPath><filter id="fb3" x="-10%" y="-10%" width="120%" height="120%"><feGaussianBlur stdDeviation="1"/></filter></defs><g clip-path="url(#ca3)"><g filter="url(#fb3)"><rect x="-4" y="-4" width="56" height="56" fill="#cbc2b3"/><rect x="-4" y="-4" width="56" height="10" fill="#8e957f"/><rect x="-4" y="14" width="56" height="10" fill="#d9d2c5"/><rect x="-4" y="30" width="14" height="20" fill="#b8ae9e"/><path d="M10 44 Q11 8 21 6 Q30 6 30 20 L27 44 Z" fill="#5a392b"/><ellipse cx="22.5" cy="17.5" rx="6" ry="7.5" fill="#e6c6b2"/><path d="M27 24 Q38 26 41 46 L30 48 Z" fill="#dad3c9"/><rect x="12" y="33" width="22" height="18" rx="3" fill="#27282c"/></g></g></svg>
<div class="t" style="left:1300.76px;top:655.09px;font-size:28px;color:#172b4d;letter-spacing:0.016px;">Joey</div>
<div class="t" style="left:1517.47px;top:655.09px;font-size:28px;color:#172b4d;letter-spacing:0.475px;">19/Oct/25</div>
<div class="t" style="left:1792.09px;top:655.09px;font-size:28px;color:#172b4d;letter-spacing:0.850px;">23/Oct/25</div>
<div class="b" style="left:2097px;top:648px;width:40px;height:40px;background:#f0a03c;border:2px solid #758195;border-radius:50%;"></div>
<div class="t" style="left:2490.59px;top:655.09px;font-size:28px;color:#172b4d;letter-spacing:2.535px;">97%</div>
<div class="b" style="left:2212px;top:662px;width:270.9px;height:12px;background:#f1f2f4;border-radius:6px;"></div>
<div class="b" style="left:2212px;top:662px;width:262.773px;height:12px;background:#44546f;border-radius:6px;"></div>
<div class="t" style="left:2584.67px;top:655.09px;font-size:28px;color:#172b4d;letter-spacing:0.600px;">1d</div>
<div class="t" style="left:54.78px;top:722.07px;font-size:20px;color:#172b4d;letter-spacing:-0.247px;">1.4</div>
<div class="b" style="left:208px;top:731px;width:41px;height:4px;background:#dcdfe4;"></div>
<svg class="b" style="left:247px;top:722px" width="22" height="22" viewBox="0 0 22 22"><circle cx="11" cy="11" r="9" fill="#dfe4ee" stroke="#c1c7d0" stroke-width="2"/></svg>
<svg class="b" style="left:273px;top:717px" width="30" height="30" viewBox="0 0 30 30"><rect x="2.6" y="2.6" width="24.8" height="24.8" rx="3.4" fill="none" stroke="#4a7ee6" stroke-width="3"/><path d="M8.6 15.2 L12.8 19.4 L21.4 10.4" fill="none" stroke="#4a7ee6" stroke-width="3" stroke-linecap="round" stroke-linejoin="round"/></svg>
<div class="t" style="left:310.70px;top:719.09px;font-size:28px;color:#2b5fd5;letter-spacing:1.774px;">MAD-8</div>
<div class="t" style="left:416.88px;top:719.09px;font-size:28px;color:#172b4d;letter-spacing:0.425px;">Create wireframes and pr...</div>
<div class="b" style="left:810px;top:718.4px;width:80px;height:27.3px;background:#dcfff1;border-radius:4px;"></div>
<div class="t" style="left:818.16px;top:721.80px;font-size:21.5px;color:#2a6b4d;font-weight:700;letter-spacing:0.554px;">DONE</div>
<svg class="b" style="left:1014px;top:724px" width="24" height="16" viewBox="0 0 24 16"><g fill="#dc7633"><rect x="0" y="2" width="24" height="2.6" rx="1"/><rect x="0" y="11.6" width="24" height="2.6" rx="1"/></g></svg>
<div class="t" style="left:1049.90px;top:719.09px;font-size:28px;color:#172b4d;letter-spacing:0.871px;">Medium</div>
<div class="b" style="left:1236px;top:704px;width:56px;height:56px;background:#dfe1e6;border-radius:50%;"></div>
<svg class="b" style="left:1240px;top:708px" width="48" height="48" viewBox="0 0 48 48"><defs><clipPath id="ca4"><circle cx="24" cy="24" r="24"/></clipPath><filter id="fb4" x="-10%" y="-10%" width="120%" height="120%"><feGaussianBlur stdDeviation="1"/></filter></defs><g clip-path="url(#ca4)"><g filter="url(#fb4)"><rect x="-4" y="-4" width="56" height="56" fill="#b9c7cd"/><path d="M-4 16 Q6 6 16 10 Q26 4 36 12 Q44 8 52 14 V30 H-4 Z" fill="#5f7f99"/><rect x="-4" y="26" width="56" height="26" fill="#87a367"/><rect x="30" y="28" width="18" height="10" fill="#6a9a78"/><ellipse cx="23" cy="21" rx="6.5" ry="7.5" fill="#8c5d45"/><ellipse cx="23" cy="21" rx="3.5" ry="4.5" fill="#c9a58c"/><path d="M8 52 Q10 32 23 30 Q36 32 40 52 Z" fill="#2f3b57"/><rect x="18" y="27" width="10" height="8" fill="#1f2a44"/><rect x="16" y="44" width="14" height="6" fill="#9aa0ac"/></g></g></svg>
<div class="t" style="left:1298.90px;top:719.09px;font-size:28px;color:#172b4d;letter-spacing:-0.249px;">Emily Ly</div>
<div class="t" style="left:1518.19px;top:719.09px;font-size:28px;color:#172b4d;letter-spacing:0.850px;">25/Oct/25</div>
<div class="t" style="left:1792.09px;top:719.09px;font-size:28px;color:#172b4d;letter-spacing:0.850px;">29/Oct/25</div>
<div class="b" style="left:2097px;top:712px;width:40px;height:40px;background:#f0ae5a;border:2px solid #758195;border-radius:50%;"></div>
<div class="t" style="left:2478.27px;top:719.09px;font-size:28px;color:#172b4d;letter-spacing:0.606px;">100%</div>
<div class="b" style="left:2212px;top:726px;width:259.4px;height:12px;background:#f1f2f4;border-radius:6px;"></div>
<div class="b" style="left:2212px;top:726px;width:259.4px;height:12px;background:#44546f;border-radius:6px;"></div>
<div class="t" style="left:54.78px;top:786.07px;font-size:20px;color:#172b4d;letter-spacing:-0.620px;">1.5</div>
<div class="b" style="left:208px;top:795px;width:41px;height:4px;background:#dcdfe4;"></div>
<svg class="b" style="left:247px;top:786px" width="22" height="22" viewBox="0 0 22 22"><circle cx="11" cy="11" r="9" fill="#dfe4ee" stroke="#c1c7d0" stroke-width="2"/></svg>
<svg class="b" style="left:273px;top:781px" width="30" height="30" viewBox="0 0 30 30"><rect x="2.6" y="2.6" width="24.8" height="24.8" rx="3.4" fill="none" stroke="#4a7ee6" stroke-width="3"/><path d="M8.6 15.2 L12.8 19.4 L21.4 10.4" fill="none" stroke="#4a7ee6" stroke-width="3" stroke-linecap="round" stroke-linejoin="round"/></svg>
<div class="t" style="left:310.70px;top:783.09px;font-size:28px;color:#2b5fd5;letter-spacing:1.447px;">MAD-7</div>
<div class="t" style="left:414.68px;top:783.09px;font-size:28px;color:#172b4d;letter-spacing:0.608px;">Conceptualize the app</div>
<div class="b" style="left:810px;top:782.4px;width:86px;height:27.3px;background:#eef0f3;border-radius:4px;"></div>
<div class="t" style="left:819.36px;top:785.80px;font-size:21.5px;color:#1c2b41;font-weight:700;letter-spacing:0.516px;">TO DO</div>
<svg class="b" style="left:1014px;top:788px" width="24" height="16" viewBox="0 0 24 16"><g fill="#dc7633"><rect x="0" y="2" width="24" height="2.6" rx="1"/><rect x="0" y="11.6" width="24" height="2.6" rx="1"/></g></svg>
<div class="t" style="left:1049.90px;top:783.09px;font-size:28px;color:#172b4d;letter-spacing:0.871px;">Medium</div>
<div class="b" style="left:1236px;top:768px;width:56px;height:56px;background:#dfe1e6;border-radius:50%;"></div>
<div class="b" style="left:1240px;top:772px;width:48px;height:48px;background:#5243aa;border-radius:50%;"></div>
<div class="t" style="left:1256.96px;top:785.42px;font-size:21px;color:#ffffff;letter-spacing:0.000px;">A</div>
<div class="t" style="left:1301.15px;top:783.09px;font-size:28px;color:#172b4d;letter-spacing:-0.513px;">Anna</div>
<div class="t" style="left:1518.19px;top:783.09px;font-size:28px;color:#172b4d;letter-spacing:0.850px;">25/Oct/25</div>
<div class="t" style="left:1792.43px;top:783.09px;font-size:28px;color:#172b4d;letter-spacing:0.850px;">30/Oct/25</div>
<div class="b" style="left:2097px;top:776px;width:40px;height:40px;background:#55b4d9;border:2px solid #758195;border-radius:50%;"></div>
<div class="t" style="left:2490.48px;top:783.09px;font-size:28px;color:#172b4d;letter-spacing:2.589px;">67%</div>
<div class="b" style="left:2212px;top:790px;width:270.9px;height:12px;background:#f1f2f4;border-radius:6px;"></div>
<div class="b" style="left:2212px;top:790px;width:181.503px;height:12px;background:#44546f;border-radius:6px;"></div>
<div class="t" style="left:2584.67px;top:783.09px;font-size:28px;color:#172b4d;letter-spacing:0.600px;">1w 2d</div>
<div class="t" style="left:55.29px;top:850.07px;font-size:20px;color:#172b4d;letter-spacing:0.000px;">2</div>
<div class="b" style="left:168px;top:859px;width:28px;height:4px;background:#dcdfe4;"></div>
<svg class="b" style="left:199px;top:854px" width="18" height="14" viewBox="0 0 18 14"><path d="M2.6 3 L9 9.4 L15.4 3" fill="none" stroke="#b3b9c4" stroke-width="3.4" stroke-linecap="round" stroke-linejoin="round"/></svg>
<svg class="b" style="left:232px;top:842px" width="32" height="36" viewBox="0 0 32 36"><path d="M20.2 3.7 L4.7 20.2 L11.6 21.8 L11.9 32 L27.3 15.4 L20 13.9 Z" fill="none" stroke="#bf63f3" stroke-width="3.1" stroke-linejoin="round"/></svg>
<div class="t" style="left:271.00px;top:847.09px;font-size:28px;color:#2b5fd5;letter-spacing:0.815px;">MAD-21</div>
<div class="t" style="left:387.50px;top:847.09px;font-size:28px;color:#172b4d;letter-spacing:0.755px;">Deployment</div>
<div class="b" style="left:810px;top:846.4px;width:80px;height:27.3px;background:#dcfff1;border-radius:4px;"></div>
<div class="t" style="left:818.16px;top:849.80px;font-size:21.5px;color:#2a6b4d;font-weight:700;letter-spacing:0.554px;">DONE</div>
<svg class="b" style="left:1014px;top:852px" width="24" height="16" viewBox="0 0 24 16"><g fill="#dc7633"><rect x="0" y="2" width="24" height="2.6" rx="1"/><rect x="0" y="11.6" width="24" height="2.6" rx="1"/></g></svg>
<div class="t" style="left:1049.90px;top:847.09px;font-size:28px;color:#172b4d;letter-spacing:0.871px;">Medium</div>
<div class="b" style="left:1236px;top:832px;width:56px;height:56px;background:#dfe1e6;border-radius:50%;"></div>
<svg class="b" style="left:1240px;top:836px" width="48" height="48" viewBox="0 0 48 48"><defs><clipPath id="ca6"><circle cx="24" cy="24" r="24"/></clipPath><filter id="fb6" x="-10%" y="-10%" width="120%" height="120%"><feGaussianBlur stdDeviation="1.4"/></filter></defs><g clip-path="url(#ca6)"><g filter="url(#fb6)"><rect x="-4" y="-4" width="56" height="56" fill="#4f6647"/><rect x="-4" y="-4" width="56" height="18" fill="#334430"/><rect x="3" y="17" width="6" height="14" fill="#a9b89d"/><rect x="13" y="16" width="5" height="16" fill="#b8c4ad"/><rect x="23" y="18" width="4" height="12" fill="#aab79e"/><rect x="33" y="15" width="6" height="16" fill="#bcc7b1"/><rect x="42" y="19" width="5" height="12" fill="#98aa88"/><rect x="9" y="12" width="3" height="26" fill="#2c3829"/><rect x="19" y="10" width="3" height="28" fill="#384633"/><rect x="40" y="12" width="3" height="30" fill="#2a3527"/><rect x="-4" y="34" width="56" height="20" fill="#6f9050"/><rect x="28" y="37" width="20" height="13" fill="#93ad66"/><path d="M21 54 L22 39 Q23 34 28.5 34 Q34 34 35 39 L35 54 Z" fill="#b08595"/><ellipse cx="29" cy="28.5" rx="3.4" ry="5.5" fill="#3f302b"/><ellipse cx="28.4" cy="28.5" rx="2" ry="3" fill="#a88474"/></g></g></svg>
<div class="t" style="left:1301.15px;top:847.09px;font-size:28px;color:#172b4d;letter-spacing:-0.805px;">Asia</div>
<div class="t" style="left:1518.19px;top:847.09px;font-size:28px;color:#172b4d;letter-spacing:0.850px;">25/Oct/25</div>
<div class="t" style="left:1792.09px;top:847.09px;font-size:28px;color:#172b4d;letter-spacing:0.850px;">25/Oct/25</div>
<div class="b" style="left:2097px;top:840px;width:40px;height:40px;background:#5fd58f;border:2px solid #758195;border-radius:50%;"></div>
<div class="t" style="left:2490.78px;top:847.09px;font-size:28px;color:#172b4d;letter-spacing:2.439px;">53%</div>
<div class="b" style="left:2212px;top:854px;width:270.9px;height:12px;background:#f1f2f4;border-radius:6px;"></div>
<div class="b" style="left:2212px;top:854px;width:143.577px;height:12px;background:#44546f;border-radius:6px;"></div>
<div class="t" style="left:2584.67px;top:847.09px;font-size:28px;color:#172b4d;letter-spacing:0.600px;">1d</div>
<div class="t" style="left:55.29px;top:914.07px;font-size:20px;color:#172b4d;letter-spacing:-0.560px;">2.1</div>
<div class="b" style="left:208px;top:923px;width:41px;height:4px;background:#dcdfe4;"></div>
<svg class="b" style="left:247px;top:914px" width="22" height="22" viewBox="0 0 22 22"><circle cx="11" cy="11" r="9" fill="#dfe4ee" stroke="#c1c7d0" stroke-width="2"/></svg>
<svg class="b" style="left:273px;top:909px" width="30" height="30" viewBox="0 0 30 30"><rect x="2.6" y="2.6" width="24.8" height="24.8" rx="3.4" fill="none" stroke="#4a7ee6" stroke-width="3"/><path d="M8.6 15.2 L12.8 19.4 L21.4 10.4" fill="none" stroke="#4a7ee6" stroke-width="3" stroke-linecap="round" stroke-linejoin="round"/></svg>
<div class="t" style="left:310.70px;top:911.09px;font-size:28px;color:#2b5fd5;letter-spacing:1.526px;">MAD-24</div>
<div class="t" style="left:431.90px;top:911.09px;font-size:28px;color:#172b4d;letter-spacing:0.582px;">Launch and promote the...</div>
<div class="b" style="left:810px;top:910.4px;width:80px;height:27.3px;background:#dcfff1;border-radius:4px;"></div>
<div class="t" style="left:818.16px;top:913.80px;font-size:21.5px;color:#2a6b4d;font-weight:700;letter-spacing:0.554px;">DONE</div>
<svg class="b" style="left:1014px;top:916px" width="24" height="16" viewBox="0 0 24 16"><g fill="#dc7633"><rect x="0" y="2" width="24" height="2.6" rx="1"/><rect x="0" y="11.6" width="24" height="2.6" rx="1"/></g></svg>
<div class="t" style="left:1049.90px;top:911.09px;font-size:28px;color:#172b4d;letter-spacing:0.871px;">Medium</div>
<div class="b" style="left:1236px;top:896px;width:56px;height:56px;background:#dfe1e6;border-radius:50%;"></div>
<div class="b" style="left:1240px;top:900px;width:48px;height:48px;background:#5243aa;border-radius:50%;"></div>
<div class="t" style="left:1256.96px;top:913.42px;font-size:21px;color:#ffffff;letter-spacing:0.000px;">A</div>
<div class="t" style="left:1301.15px;top:911.09px;font-size:28px;color:#172b4d;letter-spacing:-0.513px;">Anna</div>
<div class="t" style="left:1518.51px;top:911.09px;font-size:28px;color:#172b4d;letter-spacing:0.475px;">01/Oct/25</div>
<div class="t" style="left:1792.41px;top:911.09px;font-size:28px;color:#172b4d;letter-spacing:0.475px;">01/Oct/25</div>
<div class="b" style="left:2097px;top:904px;width:40px;height:40px;background:#5fd58f;border:2px solid #758195;border-radius:50%;"></div>
<div class="t" style="left:2508.61px;top:911.09px;font-size:28px;color:#172b4d;letter-spacing:2.623px;">0%</div>
<div class="b" style="left:2212px;top:918px;width:288.7px;height:12px;background:#f1f2f4;border-radius:6px;"></div>
<div class="t" style="left:55.29px;top:978.07px;font-size:20px;color:#172b4d;letter-spacing:0.704px;">2.2</div>
<div class="b" style="left:208px;top:987px;width:41px;height:4px;background:#dcdfe4;"></div>
<svg class="b" style="left:247px;top:978px" width="22" height="22" viewBox="0 0 22 22"><circle cx="11" cy="11" r="9" fill="#dfe4ee" stroke="#c1c7d0" stroke-width="2"/></svg>
<svg class="b" style="left:273px;top:973px" width="30" height="30" viewBox="0 0 30 30"><rect x="2.6" y="2.6" width="24.8" height="24.8" rx="3.4" fill="none" stroke="#4a7ee6" stroke-width="3"/><path d="M8.6 15.2 L12.8 19.4 L21.4 10.4" fill="none" stroke="#4a7ee6" stroke-width="3" stroke-linecap="round" stroke-linejoin="round"/></svg>
<div class="t" style="left:310.70px;top:975.09px;font-size:28px;color:#2b5fd5;letter-spacing:1.608px;">MAD-23</div>
<div class="t" style="left:432.93px;top:975.09px;font-size:28px;color:#172b4d;letter-spacing:0.496px;">Set up and configure ser...</div>
<div class="b" style="left:810px;top:974.4px;width:80px;height:27.3px;background:#dcfff1;border-radius:4px;"></div>
<div class="t" style="left:818.16px;top:977.80px;font-size:21.5px;color:#2a6b4d;font-weight:700;letter-spacing:0.554px;">DONE</div>
<svg class="b" style="left:1014px;top:980px" width="24" height="16" viewBox="0 0 24 16"><g fill="#dc7633"><rect x="0" y="2" width="24" height="2.6" rx="1"/><rect x="0" y="11.6" width="24" height="2.6" rx="1"/></g></svg>
<div class="t" style="left:1049.90px;top:975.09px;font-size:28px;color:#172b4d;letter-spacing:0.871px;">Medium</div>
<div class="b" style="left:1236px;top:960px;width:56px;height:56px;background:#dfe1e6;border-radius:50%;"></div>
<svg class="b" style="left:1240px;top:964px" width="48" height="48" viewBox="0 0 48 48"><defs><clipPath id="ca8"><circle cx="24" cy="24" r="24"/></clipPath><filter id="fb8" x="-10%" y="-10%" width="120%" height="120%"><feGaussianBlur stdDeviation="1"/></filter></defs><g clip-path="url(#ca8)"><g filter="url(#fb8)"><rect x="-4" y="-4" width="56" height="56" fill="#b9c7cd"/><path d="M-4 16 Q6 6 16 10 Q26 4 36 12 Q44 8 52 14 V30 H-4 Z" fill="#5f7f99"/><rect x="-4" y="26" width="56" height="26" fill="#87a367"/><rect x="30" y="28" width="18" height="10" fill="#6a9a78"/><ellipse cx="23" cy="21" rx="6.5" ry="7.5" fill="#8c5d45"/><ellipse cx="23" cy="21" rx="3.5" ry="4.5" fill="#c9a58c"/><path d="M8 52 Q10 32 23 30 Q36 32 40 52 Z" fill="#2f3b57"/><rect x="18" y="27" width="10" height="8" fill="#1f2a44"/><rect x="16" y="44" width="14" height="6" fill="#9aa0ac"/></g></g></svg>
<div class="t" style="left:1298.90px;top:975.09px;font-size:28px;color:#172b4d;letter-spacing:-0.249px;">Emily Ly</div>
<div class="t" style="left:1518.19px;top:975.09px;font-size:28px;color:#172b4d;letter-spacing:0.850px;">25/Oct/25</div>
<div class="t" style="left:1792.09px;top:975.09px;font-size:28px;color:#172b4d;letter-spacing:0.850px;">25/Oct/25</div>
<div class="b" style="left:2097px;top:968px;width:40px;height:40px;background:#5fd58f;border:2px solid #758195;border-radius:50%;"></div>
<div class="t" style="left:2490.78px;top:975.09px;font-size:28px;color:#172b4d;letter-spacing:2.439px;">57%</div>
<div class="b" style="left:2212px;top:982px;width:270.9px;height:12px;background:#f1f2f4;border-radius:6px;"></div>
<div class="b" style="left:2212px;top:982px;width:154.413px;height:12px;background:#44546f;border-radius:6px;"></div>
<div class="t" style="left:2584.67px;top:975.09px;font-size:28px;color:#172b4d;letter-spacing:0.600px;">1d</div>
<div class="t" style="left:55.29px;top:1042.07px;font-size:20px;color:#172b4d;letter-spacing:0.641px;">2.3</div>
<div class="b" style="left:208px;top:1051px;width:41px;height:4px;background:#dcdfe4;"></div>
<svg class="b" style="left:247px;top:1042px" width="22" height="22" viewBox="0 0 22 22"><circle cx="11" cy="11" r="9" fill="#dfe4ee" stroke="#c1c7d0" stroke-width="2"/></svg>
<svg class="b" style="left:273px;top:1037px" width="30" height="30" viewBox="0 0 30 30"><rect x="2.6" y="2.6" width="24.8" height="24.8" rx="3.4" fill="none" stroke="#4a7ee6" stroke-width="3"/><path d="M8.6 15.2 L12.8 19.4 L21.4 10.4" fill="none" stroke="#4a7ee6" stroke-width="3" stroke-linecap="round" stroke-linejoin="round"/></svg>
<div class="t" style="left:310.70px;top:1039.09px;font-size:28px;color:#2b5fd5;letter-spacing:1.463px;">MAD-22</div>
<div class="t" style="left:432.63px;top:1039.09px;font-size:28px;color:#172b4d;letter-spacing:0.640px;">Submit to app store</div>
<div class="b" style="left:810px;top:1038.4px;width:80px;height:27.3px;background:#dcfff1;border-radius:4px;"></div>
<div class="t" style="left:818.16px;top:1041.80px;font-size:21.5px;color:#2a6b4d;font-weight:700;letter-spacing:0.554px;">DONE</div>
<svg class="b" style="left:1014px;top:1044px" width="24" height="16" viewBox="0 0 24 16"><g fill="#dc7633"><rect x="0" y="2" width="24" height="2.6" rx="1"/><rect x="0" y="11.6" width="24" height="2.6" rx="1"/></g></svg>
<div class="t" style="left:1049.90px;top:1039.09px;font-size:28px;color:#172b4d;letter-spacing:0.871px;">Medium</div>
<div class="b" style="left:1236px;top:1024px;width:56px;height:56px;background:#dfe1e6;border-radius:50%;"></div>
<div class="b" style="left:1240px;top:1028px;width:48px;height:48px;background:#5243aa;border-radius:50%;"></div>
<div class="t" style="left:1256.96px;top:1041.42px;font-size:21px;color:#ffffff;letter-spacing:0.000px;">A</div>
<div class="t" style="left:1301.15px;top:1039.09px;font-size:28px;color:#172b4d;letter-spacing:-0.513px;">Anna</div>
<div class="t" style="left:1518.19px;top:1039.09px;font-size:28px;color:#172b4d;letter-spacing:0.850px;">25/Oct/25</div>
<div class="t" style="left:1792.09px;top:1039.09px;font-size:28px;color:#172b4d;letter-spacing:0.850px;">25/Oct/25</div>
<div class="b" style="left:2097px;top:1032px;width:40px;height:40px;background:#5fd58f;border:2px solid #758195;border-radius:50%;"></div>
<div class="t" style="left:2490.46px;top:1039.09px;font-size:28px;color:#172b4d;letter-spacing:2.596px;">77%</div>
<div class="b" style="left:2212px;top:1046px;width:270.9px;height:12px;background:#f1f2f4;border-radius:6px;"></div>
<div class="b" style="left:2212px;top:1046px;width:208.593px;height:12px;background:#44546f;border-radius:6px;"></div>
<div class="t" style="left:55.54px;top:1106.07px;font-size:20px;color:#172b4d;letter-spacing:0.000px;">3</div>
<div class="b" style="left:168px;top:1115px;width:28px;height:4px;background:#dcdfe4;"></div>
<svg class="b" style="left:199px;top:1110px" width="18" height="14" viewBox="0 0 18 14"><path d="M2.6 3 L9 9.4 L15.4 3" fill="none" stroke="#b3b9c4" stroke-width="3.4" stroke-linecap="round" stroke-linejoin="round"/></svg>
<svg class="b" style="left:232px;top:1098px" width="32" height="36" viewBox="0 0 32 36"><path d="M20.2 3.7 L4.7 20.2 L11.6 21.8 L11.9 32 L27.3 15.4 L20 13.9 Z" fill="none" stroke="#bf63f3" stroke-width="3.1" stroke-linejoin="round"/></svg>
<div class="t" style="left:271.30px;top:1103.09px;font-size:28px;color:#2b5fd5;letter-spacing:0.562px;">MAD-1</div>
<div class="t" style="left:371.50px;top:1103.09px;font-size:28px;color:#172b4d;letter-spacing:0.544px;">Project Management</div>
<div class="b" style="left:810px;top:1102.4px;width:80px;height:27.3px;background:#dcfff1;border-radius:4px;"></div>
<div class="t" style="left:818.16px;top:1105.80px;font-size:21.5px;color:#2a6b4d;font-weight:700;letter-spacing:0.554px;">DONE</div>
<svg class="b" style="left:1014px;top:1108px" width="24" height="16" viewBox="0 0 24 16"><g fill="#dc7633"><rect x="0" y="2" width="24" height="2.6" rx="1"/><rect x="0" y="11.6" width="24" height="2.6" rx="1"/></g></svg>
<div class="t" style="left:1049.90px;top:1103.09px;font-size:28px;color:#172b4d;letter-spacing:0.871px;">Medium</div>
<div class="b" style="left:1236px;top:1088px;width:56px;height:56px;background:#dfe1e6;border-radius:50%;"></div>
<svg class="b" style="left:1240px;top:1092px" width="48" height="48" viewBox="0 0 48 48"><defs><clipPath id="ca10"><circle cx="24" cy="24" r="24"/></clipPath><filter id="fb10" x="-10%" y="-10%" width="120%" height="120%"><feGaussianBlur stdDeviation="1.4"/></filter></defs><g clip-path="url(#ca10)"><g filter="url(#fb10)"><rect x="-4" y="-4" width="56" height="56" fill="#4f6647"/><rect x="-4" y="-4" width="56" height="18" fill="#334430"/><rect x="3" y="17" width="6" height="14" fill="#a9b89d"/><rect x="13" y="16" width="5" height="16" fill="#b8c4ad"/><rect x="23" y="18" width="4" height="12" fill="#aab79e"/><rect x="33" y="15" width="6" height="16" fill="#bcc7b1"/><rect x="42" y="19" width="5" height="12" fill="#98aa88"/><rect x="9" y="12" width="3" height="26" fill="#2c3829"/><rect x="19" y="10" width="3" height="28" fill="#384633"/><rect x="40" y="12" width="3" height="30" fill="#2a3527"/><rect x="-4" y="34" width="56" height="20" fill="#6f9050"/><rect x="28" y="37" width="20" height="13" fill="#93ad66"/><path d="M21 54 L22 39 Q23 34 28.5 34 Q34 34 35 39 L35 54 Z" fill="#b08595"/><ellipse cx="29" cy="28.5" rx="3.4" ry="5.5" fill="#3f302b"/><ellipse cx="28.4" cy="28.5" rx="2" ry="3" fill="#a88474"/></g></g></svg>
<div class="t" style="left:1301.15px;top:1103.09px;font-size:28px;color:#172b4d;letter-spacing:-0.805px;">Asia</div>
<div class="t" style="left:1518.51px;top:1103.09px;font-size:28px;color:#172b4d;letter-spacing:0.475px;">01/Oct/25</div>
<div class="t" style="left:1792.41px;top:1103.09px;font-size:28px;color:#172b4d;letter-spacing:0.850px;">04/Oct/25</div>
<div class="b" style="left:2097px;top:1096px;width:40px;height:40px;background:#ea35ea;border:2px solid #758195;border-radius:50%;"></div>
<div class="t" style="left:2490.48px;top:1103.09px;font-size:28px;color:#172b4d;letter-spacing:2.589px;">68%</div>
<div class="b" style="left:2212px;top:1110px;width:270.9px;height:12px;background:#f1f2f4;border-radius:6px;"></div>
<div class="b" style="left:2212px;top:1110px;width:184.212px;height:12px;background:#44546f;border-radius:6px;"></div>
<div class="t" style="left:2585.38px;top:1103.09px;font-size:28px;color:#172b4d;letter-spacing:0.600px;">6w 1d 5h</div>
<div class="t" style="left:55.54px;top:1170.07px;font-size:20px;color:#172b4d;letter-spacing:-0.682px;">3.1</div>
<div class="b" style="left:208px;top:1179px;width:41px;height:4px;background:#dcdfe4;"></div>
<svg class="b" style="left:247px;top:1170px" width="22" height="22" viewBox="0 0 22 22"><circle cx="11" cy="11" r="9" fill="#dfe4ee" stroke="#c1c7d0" stroke-width="2"/></svg>
<svg class="b" style="left:273px;top:1165px" width="30" height="30" viewBox="0 0 30 30"><rect x="2.6" y="2.6" width="24.8" height="24.8" rx="3.4" fill="none" stroke="#4a7ee6" stroke-width="3"/><path d="M8.6 15.2 L12.8 19.4 L21.4 10.4" fill="none" stroke="#4a7ee6" stroke-width="3" stroke-linecap="round" stroke-linejoin="round"/></svg>
<div class="t" style="left:310.80px;top:1167.09px;font-size:28px;color:#2b5fd5;letter-spacing:1.664px;">MAD-5</div>
<div class="t" style="left:415.60px;top:1167.09px;font-size:28px;color:#172b4d;letter-spacing:0.677px;">Monitor and control the pr...</div>
<div class="b" style="left:810px;top:1166.4px;width:86px;height:27.3px;background:#eef0f3;border-radius:4px;"></div>
<div class="t" style="left:819.36px;top:1169.80px;font-size:21.5px;color:#1c2b41;font-weight:700;letter-spacing:0.516px;">TO DO</div>
<svg class="b" style="left:1014px;top:1172px" width="24" height="16" viewBox="0 0 24 16"><g fill="#dc7633"><rect x="0" y="2" width="24" height="2.6" rx="1"/><rect x="0" y="11.6" width="24" height="2.6" rx="1"/></g></svg>
<div class="t" style="left:1049.90px;top:1167.09px;font-size:28px;color:#172b4d;letter-spacing:0.871px;">Medium</div>
<div class="b" style="left:1236px;top:1152px;width:56px;height:56px;background:#dfe1e6;border-radius:50%;"></div>
<div class="b" style="left:1240px;top:1156px;width:48px;height:48px;background:#5243aa;border-radius:50%;"></div>
<div class="t" style="left:1256.96px;top:1169.42px;font-size:21px;color:#ffffff;letter-spacing:0.000px;">A</div>
<div class="t" style="left:1301.15px;top:1167.09px;font-size:28px;color:#172b4d;letter-spacing:-0.513px;">Anna</div>
<div class="t" style="left:1518.51px;top:1167.09px;font-size:28px;color:#172b4d;letter-spacing:0.850px;">06/Oct/25</div>
<div class="t" style="left:1792.41px;top:1167.09px;font-size:28px;color:#172b4d;letter-spacing:0.850px;">06/Oct/25</div>
<div class="b" style="left:2097px;top:1160px;width:40px;height:40px;background:#e634e8;border:2px solid #758195;border-radius:50%;"></div>
<div class="t" style="left:2490.48px;top:1167.09px;font-size:28px;color:#172b4d;letter-spacing:2.589px;">67%</div>
<div class="b" style="left:2212px;top:1174px;width:270.9px;height:12px;background:#f1f2f4;border-radius:6px;"></div>
<div class="b" style="left:2212px;top:1174px;width:181.503px;height:12px;background:#44546f;border-radius:6px;"></div>
<div class="t" style="left:2584.67px;top:1167.09px;font-size:28px;color:#172b4d;letter-spacing:0.600px;">1w 3d</div>
<div class="t" style="left:55.54px;top:1234.07px;font-size:20px;color:#172b4d;letter-spacing:0.582px;">3.2</div>
<div class="b" style="left:208px;top:1243px;width:41px;height:4px;background:#dcdfe4;"></div>
<svg class="b" style="left:247px;top:1234px" width="22" height="22" viewBox="0 0 22 22"><circle cx="11" cy="11" r="9" fill="#dfe4ee" stroke="#c1c7d0" stroke-width="2"/></svg>
<svg class="b" style="left:273px;top:1229px" width="30" height="30" viewBox="0 0 30 30"><rect x="2.6" y="2.6" width="24.8" height="24.8" rx="3.4" fill="none" stroke="#4a7ee6" stroke-width="3"/><path d="M8.6 15.2 L12.8 19.4 L21.4 10.4" fill="none" stroke="#4a7ee6" stroke-width="3" stroke-linecap="round" stroke-linejoin="round"/></svg>
<div class="t" style="left:310.80px;top:1231.09px;font-size:28px;color:#2b5fd5;letter-spacing:1.575px;">MAD-4</div>
<div class="t" style="left:416.40px;top:1231.09px;font-size:28px;color:#172b4d;letter-spacing:0.820px;">Budget the project</div>
<div class="b" style="left:810px;top:1230.4px;width:169px;height:27.3px;background:#e9f2ff;border-radius:4px;"></div>
<div class="t" style="left:818.16px;top:1233.80px;font-size:21.5px;color:#1d54c2;font-weight:700;letter-spacing:0.294px;">IN PROGRESS</div>
<svg class="b" style="left:1014px;top:1236px" width="24" height="16" viewBox="0 0 24 16"><g fill="#dc7633"><rect x="0" y="2" width="24" height="2.6" rx="1"/><rect x="0" y="11.6" width="24" height="2.6" rx="1"/></g></svg>
<div class="t" style="left:1049.90px;top:1231.09px;font-size:28px;color:#172b4d;letter-spacing:0.871px;">Medium</div>
<div class="b" style="left:1236px;top:1216px;width:56px;height:56px;background:#dfe1e6;border-radius:50%;"></div>
<svg class="b" style="left:1240px;top:1220px" width="48" height="48" viewBox="0 0 48 48"><defs><clipPath id="ca12"><circle cx="24" cy="24" r="24"/></clipPath><filter id="fb12" x="-10%" y="-10%" width="120%" height="120%"><feGaussianBlur stdDeviation="1"/></filter></defs><g clip-path="url(#ca12)"><g filter="url(#fb12)"><rect x="-4" y="-4" width="56" height="56" fill="#a9c2db"/><rect x="-4" y="13" width="56" height="7" fill="#e6964f"/><rect x="-4" y="19" width="56" height="4" fill="#f0c25c"/><rect x="-4" y="23" width="56" height="30" fill="#5c5d64"/><rect x="-4" y="30" width="16" height="22" fill="#3f4048"/><path d="M20 52 Q20 28 31 26 Q43 28 46 52 Z" fill="#dbb3bc"/><rect x="24" y="30" width="8" height="18" fill="#c9c3d4"/><path d="M21 40 Q19 12 28 10 Q37 11 36 30 L33 40 Z" fill="#6b402f"/><ellipse cx="29.5" cy="19" rx="4.5" ry="6" fill="#e2bea6"/></g></g></svg>
<div class="t" style="left:1298.90px;top:1231.09px;font-size:28px;color:#172b4d;letter-spacing:0.401px;">Louisa Nguyen</div>
<div class="t" style="left:1517.47px;top:1231.09px;font-size:28px;color:#172b4d;letter-spacing:0.100px;">11/Oct/25</div>
<div class="t" style="left:1791.37px;top:1231.09px;font-size:28px;color:#172b4d;letter-spacing:0.475px;">14/Oct/25</div>
<div class="b" style="left:2097px;top:1224px;width:40px;height:40px;background:#dd34e6;border:2px solid #758195;border-radius:50%;"></div>
<div class="t" style="left:2497.08px;top:1231.09px;font-size:28px;color:#172b4d;letter-spacing:-0.711px;">51%</div>
<div class="b" style="left:2212px;top:1238px;width:277.2px;height:12px;background:#f1f2f4;border-radius:6px;"></div>
<div class="b" style="left:2212px;top:1238px;width:141.372px;height:12px;background:#44546f;border-radius:6px;"></div>
<div class="t" style="left:2585.68px;top:1231.09px;font-size:28px;color:#172b4d;letter-spacing:0.600px;">5h</div>
<div class="t" style="left:55.54px;top:1298.07px;font-size:20px;color:#172b4d;letter-spacing:0.519px;">3.3</div>
<div class="b" style="left:208px;top:1307px;width:41px;height:4px;background:#dcdfe4;"></div>
<svg class="b" style="left:247px;top:1298px" width="22" height="22" viewBox="0 0 22 22"><circle cx="11" cy="11" r="9" fill="#dfe4ee" stroke="#c1c7d0" stroke-width="2"/></svg>
<svg class="b" style="left:273px;top:1293px" width="30" height="30" viewBox="0 0 30 30"><rect x="2.6" y="2.6" width="24.8" height="24.8" rx="3.4" fill="none" stroke="#4a7ee6" stroke-width="3"/><path d="M8.6 15.2 L12.8 19.4 L21.4 10.4" fill="none" stroke="#4a7ee6" stroke-width="3" stroke-linecap="round" stroke-linejoin="round"/></svg>
<div class="t" style="left:310.80px;top:1295.09px;font-size:28px;color:#2b5fd5;letter-spacing:1.678px;">MAD-3</div>
<div class="t" style="left:416.63px;top:1295.09px;font-size:28px;color:#172b4d;letter-spacing:0.637px;">Schedule the project</div>
<div class="b" style="left:810px;top:1294.4px;width:80px;height:27.3px;background:#dcfff1;border-radius:4px;"></div>
<div class="t" style="left:818.16px;top:1297.80px;font-size:21.5px;color:#2a6b4d;font-weight:700;letter-spacing:0.554px;">DONE</div>
<svg class="b" style="left:1014px;top:1300px" width="24" height="16" viewBox="0 0 24 16"><g fill="#dc7633"><rect x="0" y="2" width="24" height="2.6" rx="1"/><rect x="0" y="11.6" width="24" height="2.6" rx="1"/></g></svg>
<div class="t" style="left:1049.90px;top:1295.09px;font-size:28px;color:#172b4d;letter-spacing:0.871px;">Medium</div>
<div class="b" style="left:1236px;top:1280px;width:56px;height:56px;background:#dfe1e6;border-radius:50%;"></div>
<svg class="b" style="left:1240px;top:1284px" width="48" height="48" viewBox="0 0 48 48"><defs><clipPath id="ca13"><circle cx="24" cy="24" r="24"/></clipPath><filter id="fb13" x="-10%" y="-10%" width="120%" height="120%"><feGaussianBlur stdDeviation="1.4"/></filter></defs><g clip-path="url(#ca13)"><g filter="url(#fb13)"><rect x="-4" y="-4" width="56" height="56" fill="#4f6647"/><rect x="-4" y="-4" width="56" height="18" fill="#334430"/><rect x="3" y="17" width="6" height="14" fill="#a9b89d"/><rect x="13" y="16" width="5" height="16" fill="#b8c4ad"/><rect x="23" y="18" width="4" height="12" fill="#aab79e"/><rect x="33" y="15" width="6" height="16" fill="#bcc7b1"/><rect x="42" y="19" width="5" height="12" fill="#98aa88"/><rect x="9" y="12" width="3" height="26" fill="#2c3829"/><rect x="19" y="10" width="3" height="28" fill="#384633"/><rect x="40" y="12" width="3" height="30" fill="#2a3527"/><rect x="-4" y="34" width="56" height="20" fill="#6f9050"/><rect x="28" y="37" width="20" height="13" fill="#93ad66"/><path d="M21 54 L22 39 Q23 34 28.5 34 Q34 34 35 39 L35 54 Z" fill="#b08595"/><ellipse cx="29" cy="28.5" rx="3.4" ry="5.5" fill="#3f302b"/><ellipse cx="28.4" cy="28.5" rx="2" ry="3" fill="#a88474"/></g></g></svg>
<div class="t" style="left:1301.15px;top:1295.09px;font-size:28px;color:#172b4d;letter-spacing:-0.805px;">Asia</div>
<div class="t" style="left:1517.47px;top:1295.09px;font-size:28px;color:#172b4d;letter-spacing:0.475px;">17/Oct/25</div>
<div class="t" style="left:1791.37px;top:1295.09px;font-size:28px;color:#172b4d;letter-spacing:0.475px;">17/Oct/25</div>
<div class="b" style="left:2097px;top:1288px;width:40px;height:40px;background:#473a90;border:2px solid #758195;border-radius:50%;"></div>
<div class="t" style="left:2508.61px;top:1295.09px;font-size:28px;color:#172b4d;letter-spacing:2.623px;">0%</div>
<div class="b" style="left:2212px;top:1302px;width:288.7px;height:12px;background:#f1f2f4;border-radius:6px;"></div>
<div class="t" style="left:2584.67px;top:1295.09px;font-size:28px;color:#172b4d;letter-spacing:0.600px;">1w 3d</div>
<div class="t" style="left:55.54px;top:1362.07px;font-size:20px;color:#172b4d;letter-spacing:0.622px;">3.4</div>
<div class="b" style="left:208px;top:1371px;width:41px;height:4px;background:#dcdfe4;"></div>
<svg class="b" style="left:247px;top:1362px" width="22" height="22" viewBox="0 0 22 22"><circle cx="11" cy="11" r="9" fill="#dfe4ee" stroke="#c1c7d0" stroke-width="2"/></svg>
<svg class="b" style="left:273px;top:1357px" width="30" height="30" viewBox="0 0 30 30"><rect x="2.6" y="2.6" width="24.8" height="24.8" rx="3.4" fill="none" stroke="#4a7ee6" stroke-width="3"/><path d="M8.6 15.2 L12.8 19.4 L21.4 10.4" fill="none" stroke="#4a7ee6" stroke-width="3" stroke-linecap="round" stroke-linejoin="round"/></svg>
<div class="t" style="left:310.80px;top:1359.09px;font-size:28px;color:#2b5fd5;letter-spacing:1.722px;">MAD-2</div>
<div class="t" style="left:415.60px;top:1359.09px;font-size:28px;color:#172b4d;letter-spacing:0.583px;">Plan the project</div>
<div class="b" style="left:810px;top:1358.4px;width:169px;height:27.3px;background:#e9f2ff;border-radius:4px;"></div>
<div class="t" style="left:818.16px;top:1361.80px;font-size:21.5px;color:#1d54c2;font-weight:700;letter-spacing:0.294px;">IN PROGRESS</div>
<svg class="b" style="left:1014px;top:1364px" width="24" height="16" viewBox="0 0 24 16"><g fill="#dc7633"><rect x="0" y="2" width="24" height="2.6" rx="1"/><rect x="0" y="11.6" width="24" height="2.6" rx="1"/></g></svg>
<div class="t" style="left:1049.90px;top:1359.09px;font-size:28px;color:#172b4d;letter-spacing:0.871px;">Medium</div>
<div class="b" style="left:1236px;top:1344px;width:56px;height:56px;background:#dfe1e6;border-radius:50%;"></div>
<svg class="b" style="left:1240px;top:1348px" width="48" height="48" viewBox="0 0 48 48"><defs><clipPath id="ca14"><circle cx="24" cy="24" r="24"/></clipPath><filter id="fb14" x="-10%" y="-10%" width="120%" height="120%"><feGaussianBlur stdDeviation="1"/></filter></defs><g clip-path="url(#ca14)"><g filter="url(#fb14)"><rect x="-4" y="-4" width="56" height="56" fill="#b9c7cd"/><path d="M-4 16 Q6 6 16 10 Q26 4 36 12 Q44 8 52 14 V30 H-4 Z" fill="#5f7f99"/><rect x="-4" y="26" width="56" height="26" fill="#87a367"/><rect x="30" y="28" width="18" height="10" fill="#6a9a78"/><ellipse cx="23" cy="21" rx="6.5" ry="7.5" fill="#8c5d45"/><ellipse cx="23" cy="21" rx="3.5" ry="4.5" fill="#c9a58c"/><path d="M8 52 Q10 32 23 30 Q36 32 40 52 Z" fill="#2f3b57"/><rect x="18" y="27" width="10" height="8" fill="#1f2a44"/><rect x="16" y="44" width="14" height="6" fill="#9aa0ac"/></g></g></svg>
<div class="t" style="left:1298.90px;top:1359.09px;font-size:28px;color:#172b4d;letter-spacing:-0.249px;">Emily Ly</div>
<div class="t" style="left:1518.19px;top:1359.09px;font-size:28px;color:#172b4d;letter-spacing:0.850px;">20/Oct/25</div>
<div class="t" style="left:1792.09px;top:1359.09px;font-size:28px;color:#172b4d;letter-spacing:0.850px;">26/Oct/25</div>
<div class="b" style="left:2097px;top:1352px;width:40px;height:40px;background:#f0ae5a;border:2px solid #758195;border-radius:50%;"></div>
<div class="t" style="left:2490.46px;top:1359.09px;font-size:28px;color:#172b4d;letter-spacing:2.596px;">77%</div>
<div class="b" style="left:2212px;top:1366px;width:270.9px;height:12px;background:#f1f2f4;border-radius:6px;"></div>
<div class="b" style="left:2212px;top:1366px;width:208.593px;height:12px;background:#44546f;border-radius:6px;"></div>
<div class="t" style="left:2584.67px;top:1359.09px;font-size:28px;color:#172b4d;letter-spacing:0.600px;">1w</div>
<div class="t" style="left:55.84px;top:1426.07px;font-size:20px;color:#172b4d;letter-spacing:0.000px;">4</div>
<div class="b" style="left:168px;top:1435px;width:28px;height:4px;background:#dcdfe4;"></div>
<svg class="b" style="left:199px;top:1430px" width="18" height="14" viewBox="0 0 18 14"><path d="M2.6 3 L9 9.4 L15.4 3" fill="none" stroke="#b3b9c4" stroke-width="3.4" stroke-linecap="round" stroke-linejoin="round"/></svg>
<svg class="b" style="left:232px;top:1418px" width="32" height="36" viewBox="0 0 32 36"><path d="M20.2 3.7 L4.7 20.2 L11.6 21.8 L11.9 32 L27.3 15.4 L20 13.9 Z" fill="none" stroke="#bf63f3" stroke-width="3.1" stroke-linejoin="round"/></svg>
<div class="t" style="left:271.30px;top:1423.09px;font-size:28px;color:#2b5fd5;letter-spacing:-0.205px;">MAD-11</div>
<div class="t" style="left:384.30px;top:1423.09px;font-size:28px;color:#172b4d;letter-spacing:0.622px;">Development</div>
<div class="b" style="left:810px;top:1422.4px;width:80px;height:27.3px;background:#dcfff1;border-radius:4px;"></div>
<div class="t" style="left:818.16px;top:1425.80px;font-size:21.5px;color:#2a6b4d;font-weight:700;letter-spacing:0.554px;">DONE</div>
<svg class="b" style="left:1014px;top:1428px" width="24" height="16" viewBox="0 0 24 16"><g fill="#dc7633"><rect x="0" y="2" width="24" height="2.6" rx="1"/><rect x="0" y="11.6" width="24" height="2.6" rx="1"/></g></svg>
<div class="t" style="left:1049.90px;top:1423.09px;font-size:28px;color:#172b4d;letter-spacing:0.871px;">Medium</div>
<div class="b" style="left:1236px;top:1408px;width:56px;height:56px;background:#dfe1e6;border-radius:50%;"></div>
<svg class="b" style="left:1240px;top:1412px" width="48" height="48" viewBox="0 0 48 48"><defs><clipPath id="ca15"><circle cx="24" cy="24" r="24"/></clipPath><filter id="fb15" x="-10%" y="-10%" width="120%" height="120%"><feGaussianBlur stdDeviation="1.4"/></filter></defs><g clip-path="url(#ca15)"><g filter="url(#fb15)"><rect x="-4" y="-4" width="56" height="56" fill="#4f6647"/><rect x="-4" y="-4" width="56" height="18" fill="#334430"/><rect x="3" y="17" width="6" height="14" fill="#a9b89d"/><rect x="13" y="16" width="5" height="16" fill="#b8c4ad"/><rect x="23" y="18" width="4" height="12" fill="#aab79e"/><rect x="33" y="15" width="6" height="16" fill="#bcc7b1"/><rect x="42" y="19" width="5" height="12" fill="#98aa88"/><rect x="9" y="12" width="3" height="26" fill="#2c3829"/><rect x="19" y="10" width="3" height="28" fill="#384633"/><rect x="40" y="12" width="3" height="30" fill="#2a3527"/><rect x="-4" y="34" width="56" height="20" fill="#6f9050"/><rect x="28" y="37" width="20" height="13" fill="#93ad66"/><path d="M21 54 L22 39 Q23 34 28.5 34 Q34 34 35 39 L35 54 Z" fill="#b08595"/><ellipse cx="29" cy="28.5" rx="3.4" ry="5.5" fill="#3f302b"/><ellipse cx="28.4" cy="28.5" rx="2" ry="3" fill="#a88474"/></g></g></svg>
<div class="t" style="left:1301.15px;top:1423.09px;font-size:28px;color:#172b4d;letter-spacing:-0.805px;">Asia</div>
<div class="t" style="left:1518.19px;top:1423.09px;font-size:28px;color:#172b4d;letter-spacing:0.850px;">20/Oct/25</div>
<div class="t" style="left:1792.41px;top:1423.09px;font-size:28px;color:#172b4d;letter-spacing:0.850px;">05/Nov/25</div>
<div class="b" style="left:2097px;top:1416px;width:40px;height:40px;background:#5fd58f;border:2px solid #758195;border-radius:50%;"></div>
<div class="t" style="left:2496.76px;top:1423.09px;font-size:28px;color:#172b4d;letter-spacing:-0.554px;">71%</div>
<div class="b" style="left:2212px;top:1430px;width:277.2px;height:12px;background:#f1f2f4;border-radius:6px;"></div>
<div class="b" style="left:2212px;top:1430px;width:196.812px;height:12px;background:#44546f;border-radius:6px;"></div>
<div class="t" style="left:2585.73px;top:1423.09px;font-size:28px;color:#172b4d;letter-spacing:0.600px;">3w 4d</div>
</div></div>
<div class="b" style="left:2834px;top:381px;width:2px;height:1075px;background:#ebecf0;"></div>
<div class="b" style="left:2836px;top:381px;width:28px;height:1075px;background:#fafafa;"></div>
<div class="b" style="left:2842px;top:387px;width:16px;height:474px;background:#c1c1c1;border-radius:8px;"></div>
<div class="b" style="left:16px;top:1454px;width:2848px;height:2px;background:#e4e5e9;"></div>
<div class="b" style="left:25px;top:1462px;width:2689px;height:16px;background:#c1c1c1;border-radius:8px;"></div>
<div class="b" style="left:2755px;top:1355px;width:78px;height:86px;background:#fff;border:1.5px solid #dfe1e6;border-radius:6px;box-shadow:0 1px 3px rgba(9,30,66,0.12);"></div>
<svg class="b" style="left:2776px;top:1378px" width="40" height="40" viewBox="0 0 40 40"><circle cx="20" cy="20" r="20" fill="#1c2b4a"/><path d="M23 13.4 L16.6 20 L23 26.6" fill="none" stroke="#fff" stroke-width="4" stroke-linecap="round" stroke-linejoin="round"/></svg>
</body></html>
